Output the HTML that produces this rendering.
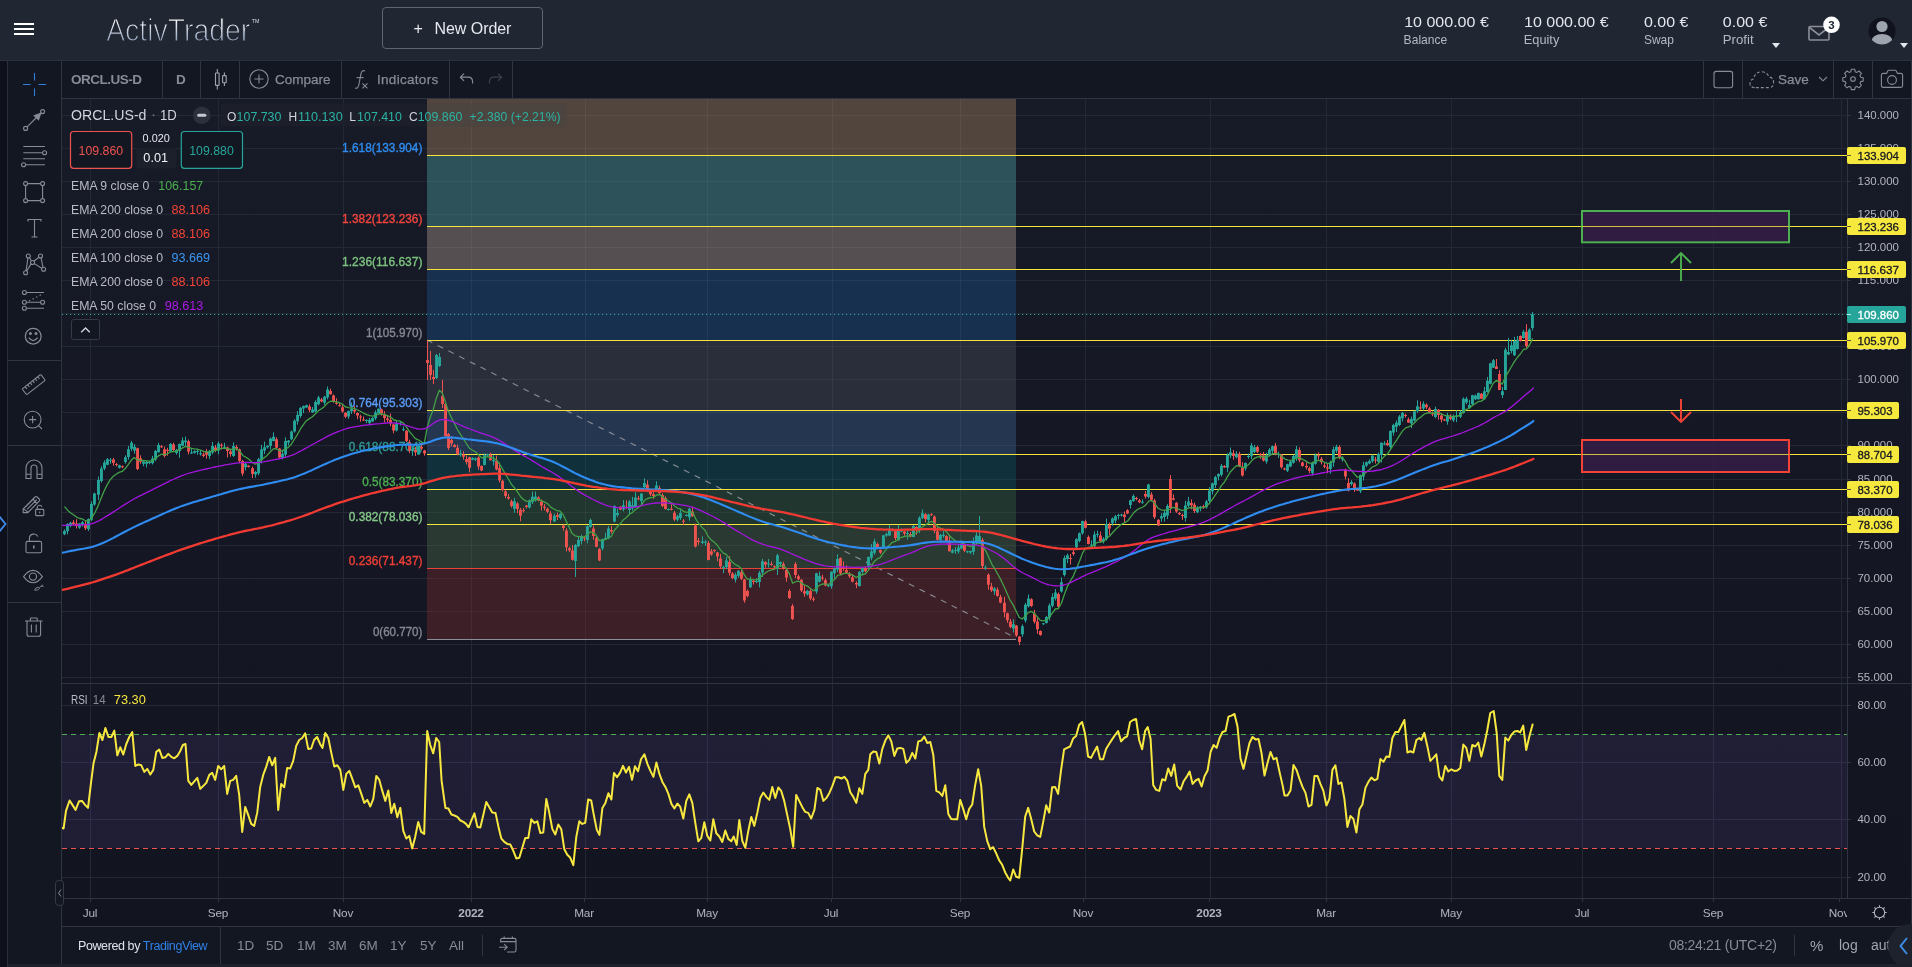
<!DOCTYPE html>
<html lang="en"><head><meta charset="utf-8"><title>ActivTrader</title>
<style>
*{box-sizing:border-box}
html,body{margin:0;padding:0}
body{width:1912px;height:967px;overflow:hidden;position:relative;background:#0f121c;font-family:"Liberation Sans",sans-serif;color:#d1d4dc}
.abs{position:absolute}
svg,#top,#tbar,#bbar{will-change:transform}
#top{position:absolute;left:0;top:0;width:1912px;height:60px;background:#202632}
#topline{position:absolute;left:0;top:60px;width:1912px;height:1px;background:#2b303c}
.ham{position:absolute;left:14px;width:20px;height:2.2px;background:#fff}
#logo{position:absolute;left:106px;top:12.3px;font-size:31px;line-height:38px;letter-spacing:-0.9px;color:#c9d2e0;-webkit-text-stroke:1.3px #202632;background:linear-gradient(#eef1f6 25%,#94a3ba 85%);-webkit-background-clip:text;background-clip:text;-webkit-text-fill-color:transparent;white-space:nowrap}
#tm{position:absolute;left:251.5px;top:16.6px;font-size:8px;color:#c9d2e0;letter-spacing:-0.3px}
#neworder{position:absolute;left:382px;top:6.5px;width:161px;height:42px;border:1px solid #5d6472;border-radius:4px;color:#e6e9ef;font-size:16px;line-height:41px;white-space:nowrap}
#neworder span{position:absolute;top:0.5px}
.acc{position:absolute;top:0;white-space:nowrap}
.acc b{position:absolute;left:0;top:12px;font-weight:normal;font-size:15.5px;line-height:18px;color:#e4e7ee;letter-spacing:-0.2px}
.acc i{position:absolute;left:0;top:31px;font-style:normal;font-size:14px;line-height:16px;color:#b3bac6;letter-spacing:-0.3px}
.tri{position:absolute;width:0;height:0;border-left:4.5px solid transparent;border-right:4.5px solid transparent;border-top:5.5px solid #e4e7ee}
#strip{position:absolute;left:0;top:61px;width:8px;height:906px;background:#0e111b;border-right:1px solid #2a2e39}
#ltool{position:absolute;left:8px;top:61px;width:54px;height:903px;background:#131722;border-right:1px solid #2f3441}
#ltool svg{position:absolute;left:12px;width:28px;height:28px;overflow:visible}
.lsep{position:absolute;left:0;width:53px;height:1px;background:#2f3441}
#tbar{position:absolute;left:62px;top:61px;width:1850px;height:38px;background:#131722;border-bottom:1px solid #2f3441;border-right:1px solid #2f3441}
.vsep{position:absolute;top:0;width:1px;height:37px;background:#2f3441}
.tbt{position:absolute;top:0.8px;height:37px;line-height:36px;font-size:13.5px;color:#868b98;white-space:nowrap;-webkit-text-stroke:0.25px #868b98}
#bbar{position:absolute;left:62px;top:926px;width:1850px;height:38px;background:#131722;border-top:1px solid #2f3441}
#bbot{position:absolute;left:8px;top:964px;width:1904px;height:3px;background:#1d212c}
.bt{position:absolute;top:0;height:37px;line-height:37px;font-size:13.5px;color:#868b98;white-space:nowrap}
</style></head><body>
<div id="top">
 <div class="ham" style="top:22.8px"></div><div class="ham" style="top:27.9px"></div><div class="ham" style="top:32.9px"></div>
 <svg class="abs" style="left:100px;top:8px" width="170" height="44" viewBox="0 0 170 44" font-family="Liberation Sans, sans-serif">
  <defs><linearGradient id="lg" x1="0" y1="0" x2="0" y2="1"><stop offset="0.25" stop-color="#f4f6fa"/><stop offset="0.8" stop-color="#8f9fb8"/></linearGradient></defs>
  <text x="6.2" y="33" font-size="31.2" fill="url(#lg)" stroke="#202632" stroke-width="1.1" textLength="144" lengthAdjust="spacingAndGlyphs">ActivTrader</text>
  <text x="151.8" y="14.6" font-size="5.6" fill="#d5dbe6" textLength="7.6" lengthAdjust="spacingAndGlyphs">TM</text>
 </svg>
 <div id="neworder"><span style="left:30.5px">+</span><span style="left:51.5px;letter-spacing:-0.05px">New Order</span></div>
 <svg class="abs" style="left:1390px;top:0" width="400" height="60" viewBox="0 0 400 60" font-family="Liberation Sans, sans-serif">
  <g font-size="15.3" fill="#e4e7ee"><text x="14.2" y="27.3" textLength="84.6" lengthAdjust="spacingAndGlyphs">10 000.00 €</text><text x="134" y="27.3" textLength="84.6" lengthAdjust="spacingAndGlyphs">10 000.00 €</text><text x="253.9" y="27.3" textLength="44.5" lengthAdjust="spacingAndGlyphs">0.00 €</text><text x="332.8" y="27.3" textLength="44.5" lengthAdjust="spacingAndGlyphs">0.00 €</text></g>
  <g font-size="13.4" fill="#b3bac6"><text x="13.6" y="43.7" textLength="43.7" lengthAdjust="spacingAndGlyphs">Balance</text><text x="133.8" y="43.7" textLength="35.5" lengthAdjust="spacingAndGlyphs">Equity</text><text x="253.9" y="43.7" textLength="30" lengthAdjust="spacingAndGlyphs">Swap</text><text x="332.8" y="43.7" textLength="30.8" lengthAdjust="spacingAndGlyphs">Profit</text></g>
 </svg>
 <div class="tri" style="left:1772.4px;top:42.6px"></div>
 <svg class="abs" style="left:1806px;top:14px" width="40" height="32" viewBox="0 0 40 32">
  <rect x="3" y="12.5" width="20" height="13.5" rx="1" fill="none" stroke="#8b8f99" stroke-width="1.6"/>
  <path d="M3.5 13.5 L13 21 L22.5 13.5" fill="none" stroke="#8b8f99" stroke-width="1.6"/>
  <circle cx="25.5" cy="10.8" r="8.3" fill="#fff"/>
  <text x="25.5" y="15" font-size="11.5" font-weight="bold" text-anchor="middle" fill="#202632" font-family="Liberation Sans, sans-serif">3</text>
 </svg>
 <svg class="abs" style="left:1866px;top:15px" width="32" height="32" viewBox="0 0 32 32">
  <defs><clipPath id="avc"><circle cx="16" cy="16" r="13.6"/></clipPath></defs>
  <circle cx="16" cy="16" r="13.6" fill="#10131d"/>
  <g clip-path="url(#avc)" fill="#9ea4ae"><circle cx="16" cy="11.5" r="5.6"/><ellipse cx="16" cy="26" rx="10.5" ry="7"/></g>
 </svg>
 <div class="tri" style="left:1899.6px;top:42.6px"></div>
</div>
<div id="topline"></div>
<div id="strip"></div>
<svg class="abs" style="left:0;top:515px" width="8" height="18" viewBox="0 0 8 18"><path d="M-1 1 L5.5 9 L-1 17" fill="none" stroke="#3d8be8" stroke-width="1.8"/></svg>
<div id="ltool">
<!-- crosshair cy=84 -->
<svg style="top:9px" viewBox="0 0 28 28"><g stroke="#2e7fe0" stroke-width="1.1" fill="none"><path d="M14.5 3 V10.5 M14.5 18.5 V26 M3 14.5 H10.5 M18.5 14.5 H26"/></g></svg>
<!-- trend line cy=120 -->
<svg style="top:45px" viewBox="0 0 28 28"><g stroke="#868b98" stroke-width="1.1" fill="none"><circle cx="5.6" cy="22.4" r="2"/><circle cx="22.6" cy="5.6" r="2"/><path d="M7.1 20.9 L17 11"/><path d="M20.8 7.2 L14.2 9.6 L18.5 13.8 Z" fill="#868b98"/></g></svg>
<!-- fib cy=156 -->
<svg style="top:81px" viewBox="0 0 28 28"><g stroke="#868b98" stroke-width="1.1" fill="none"><path d="M3.3 4.5 H25 M3.3 10.8 H22.6 M3.3 16.8 H25 M5.6 22.7 H25"/><circle cx="24.6" cy="10.8" r="2" fill="#131722"/><circle cx="3.6" cy="22.7" r="2" fill="#131722"/></g></svg>
<!-- rect cy=192 -->
<svg style="top:117px" viewBox="0 0 28 28"><g stroke="#868b98" stroke-width="1.1" fill="none"><path d="M7.6 5.6 H20.6 M7.6 22.6 H20.6 M5.6 7.6 V20.6 M22.6 7.6 V20.6"/><circle cx="5.6" cy="5.6" r="2"/><circle cx="22.6" cy="5.6" r="2"/><circle cx="5.6" cy="22.6" r="2"/><circle cx="22.6" cy="22.6" r="2"/></g></svg>
<!-- T cy=228 -->
<svg style="top:153px" viewBox="0 0 28 28"><g stroke="#868b98" stroke-width="1.1" fill="none"><path d="M8 7.5 V5.5 H21 V7.5 M14.5 5.5 V23 M11.5 23 H17.5"/></g></svg>
<!-- pattern cy=264 -->
<svg style="top:189px" viewBox="0 0 28 28"><g stroke="#868b98" stroke-width="1.1" fill="none"><path d="M6 21 L8 7.8 M9.3 7.3 L11.5 11 M13.7 11.3 L19 7.3 M21 7.5 L23 17.3 M22 18.5 L14 13.4 M11.2 13.6 L6.6 21.2"/><circle cx="8.3" cy="6" r="2"/><circle cx="20.5" cy="6" r="2"/><circle cx="12.5" cy="12.5" r="2"/><circle cx="5.6" cy="22.8" r="2"/><circle cx="23.6" cy="19.3" r="2"/></g></svg>
<!-- prediction cy=300 -->
<svg style="top:225px" viewBox="0 0 28 28"><g stroke="#868b98" stroke-width="1.1" fill="none"><path d="M6.4 6.5 H24 M6.4 16.3 H20.6 M6.4 22.3 H24"/><path d="M9 15 L22.5 8" stroke-dasharray="1.4 2.6"/><circle cx="4.4" cy="6.5" r="2"/><circle cx="4.4" cy="16.3" r="2"/><circle cx="22.6" cy="16.3" r="2"/><circle cx="4.4" cy="22.3" r="2"/></g></svg>
<!-- smiley cy=336 -->
<svg style="top:261px" viewBox="0 0 28 28"><g stroke="#868b98" stroke-width="1.2" fill="none"><circle cx="13.2" cy="14.2" r="7.9"/><path d="M8.8 15.6 Q13.2 21.5 17.6 15.6"/><circle cx="10.4" cy="11.6" r="0.9" fill="#868b98"/><circle cx="16" cy="11.6" r="0.9" fill="#868b98"/></g></svg>
<div class="lsep" style="top:299px"></div>
<!-- ruler cy=385 -->
<svg style="top:310px" viewBox="0 0 28 28"><g stroke="#868b98" stroke-width="1.1" fill="none" transform="rotate(-38 14 14)"><rect x="2.2" y="9.8" width="23.6" height="7.4" rx="1"/><path d="M6 9.8 V12.6 M9.2 9.8 V12.6 M12.4 9.8 V12.6 M15.6 9.8 V12.6 M18.8 9.8 V12.6 M22 9.8 V12.6"/></g></svg>
<!-- zoom cy=420 -->
<svg style="top:345px" viewBox="0 0 28 28"><g stroke="#868b98" stroke-width="1.1" fill="none"><circle cx="12.6" cy="13.6" r="8.4"/><path d="M12.6 10 V17.2 M9 13.6 H16.2 M18.6 19.6 L22 23"/></g></svg>
<div class="lsep" style="top:384px"></div>
<!-- magnet cy=469.5 -->
<svg style="top:394px" viewBox="0 0 28 28"><g stroke="#868b98" stroke-width="1.1" fill="none"><path d="M6 23.5 V13 A8 8 0 0 1 22 13 V23.5 H17 V13 A3 3 0 0 0 11 13 V23.5 Z M6 19.3 H11 M17 19.3 H22"/></g></svg>
<!-- pencil lock cy=504 -->
<svg style="top:429px" viewBox="0 0 28 28"><g stroke="#868b98" stroke-width="1.1" fill="none"><path d="M3.2 18.8 L15 7 A1.6 1.6 0 0 1 17.2 7 L19.2 9 A1.6 1.6 0 0 1 19.2 11.2 L7.8 22.6 H3.2 Z M12.8 9.2 L17 13.4 M3.4 18.6 L8 22.4 M5 17.4 L14.5 7.8 M7 19.4 L16.8 9.6"/><rect x="15.6" y="19.4" width="8.2" height="6.2" rx="0.8"/><path d="M17.2 19.4 V17.6 A2.5 2.5 0 0 1 22 16.8"/><path d="M19.7 21.6 V23.2"/></g></svg>
<!-- lock cy=543 -->
<svg style="top:468px" viewBox="0 0 28 28"><g stroke="#868b98" stroke-width="1.1" fill="none"><rect x="6" y="12.4" width="15.6" height="11.4" rx="1.6"/><path d="M9.4 12.4 V9.2 A4.4 4.4 0 0 1 17.8 7.6"/><path d="M13.8 16.6 V19.4" stroke-width="1.6"/></g></svg>
<!-- eye cy=577 -->
<svg style="top:502px" viewBox="0 0 28 28"><g stroke="#868b98" stroke-width="1.1" fill="none"><path d="M3.6 13.6 Q13 1.2 22.4 13.6 Q13 26 3.6 13.6 Z"/><circle cx="13" cy="13.6" r="3.6"/><path d="M14.6 27.2 Q15.2 24.4 18.2 24.2 L19.6 25.2 Q18.6 27.8 14.6 27.2 Z M19.4 24.6 L22.8 21.8 M21 23 L23.6 23.4" stroke-width="0.9"/></g></svg>
<div class="lsep" style="top:541px"></div>
<!-- trash cy=627 -->
<svg style="top:552px" viewBox="0 0 28 28"><g stroke="#868b98" stroke-width="1.1" fill="none"><path d="M5 8 H22.6 M10.4 8 V5.6 Q10.4 5 11 5 H16.6 Q17.2 5 17.2 5.6 V8 M7 8 V21.2 Q7 23.2 9 23.2 H18.6 Q20.6 23.2 20.6 21.2 V8 M11.4 11.6 V19.4 M16.2 11.6 V19.4"/></g></svg>
</div>

<div id="tbar">
 <div class="tbt" style="left:9px;font-weight:bold;letter-spacing:-0.5px;-webkit-text-stroke:0">ORCL.US-D</div>
 <div class="vsep" style="left:100px"></div>
 <div class="tbt" style="left:114px;font-weight:bold;-webkit-text-stroke:0">D</div>
 <div class="vsep" style="left:138px"></div>
 <svg class="abs" style="left:144.6px;top:4px" width="28" height="28" viewBox="0 0 28 28"><g stroke="#a0a4af" stroke-width="1.1" fill="none"><rect x="8.5" y="8" width="3.6" height="12.4" rx="0.5"/><path d="M10.3 4 V8 M10.3 20.4 V24.4"/><rect x="15.6" y="10.6" width="3.6" height="7.2" rx="0.5"/><path d="M17.4 7.4 V10.6 M17.4 17.8 V21"/></g></svg>
 <div class="vsep" style="left:177px"></div>
 <svg class="abs" style="left:182.6px;top:4.3px" width="28" height="28" viewBox="0 0 28 28"><g stroke="#868b98" stroke-width="1.1" fill="none"><circle cx="14" cy="14" r="9.2"/><path d="M14 9.4 V18.6 M9.4 14 H18.6"/></g></svg>
 <div class="tbt" style="left:213px">Compare</div>
 <div class="vsep" style="left:279px"></div>
 <svg class="abs" style="left:290px;top:4px" width="20" height="28" viewBox="0 0 20 28"><g stroke="#868b98" stroke-width="1.1" fill="none"><path d="M3 23 Q6 24 6.8 20 L9 8.6 Q9.8 4.6 13 6"/><path d="M4.6 12.6 H11.6"/><path d="M10.4 18.4 L15.4 23.4 M15.4 18.4 L10.4 23.4"/></g></svg>
 <div class="tbt" style="left:315px;letter-spacing:0.3px">Indicators</div>
 <div class="vsep" style="left:387px"></div>
 <svg class="abs" style="left:396px;top:8px" width="18" height="20" viewBox="0 0 18 20"><g stroke="#868b98" stroke-width="1.2" fill="none"><path d="M6 4.6 L2.4 8.2 L6 11.8 M2.6 8.2 H10 Q14.6 8.2 14.6 13 V14.4"/></g></svg>
 <svg class="abs" style="left:424px;top:8px" width="18" height="20" viewBox="0 0 18 20"><g stroke="#3c404c" stroke-width="1.2" fill="none"><path d="M12 4.6 L15.6 8.2 L12 11.8 M15.4 8.2 H8 Q3.4 8.2 3.4 13 V14.4"/></g></svg>
 <div class="vsep" style="left:450px"></div>
 <div class="vsep" style="left:1641px"></div>
 <svg class="abs" style="left:1647px;top:5px" width="28" height="28" viewBox="0 0 28 28"><rect x="5" y="5.4" width="18.6" height="16.4" rx="2.2" fill="none" stroke="#868b98" stroke-width="1.1"/></svg>
 <div class="vsep" style="left:1680px"></div>
 <svg class="abs" style="left:1685px;top:5px" width="30" height="28" viewBox="0 0 30 28"><path d="M7.6 21.6 Q3 21.4 3 17.4 Q3 13.8 6.8 13 Q7.6 6 14.6 5.8 Q20 5.8 22 11 Q26.6 11.6 26.6 16.4 Q26.6 21.6 22 21.6 Z" fill="none" stroke="#868b98" stroke-width="1.1" stroke-dasharray="3 2"/></svg>
 <div class="tbt" style="left:1716px">Save</div>
 <svg class="abs" style="left:1755px;top:13px" width="12" height="10" viewBox="0 0 12 10"><path d="M2 3 L6 6.8 L10 3" fill="none" stroke="#868b98" stroke-width="1.1"/></svg>
 <div class="vsep" style="left:1771px"></div>
 <svg class="abs" style="left:1777px;top:4px" width="28" height="28" viewBox="0 0 28 28"><g fill="none" stroke="#868b98" stroke-width="1.1"><circle cx="14" cy="14" r="2.3"/><path id="gear" d="M12.3 4.2 h3.4 l0.5 2.5 l1.7 0.7 l2.1-1.4 l2.4 2.4 l-1.4 2.1 l0.7 1.7 l2.5 0.5 v3.4 l-2.5 0.5 l-0.7 1.7 l1.4 2.1 l-2.4 2.4 l-2.1-1.4 l-1.7 0.7 l-0.5 2.5 h-3.4 l-0.5-2.5 l-1.7-0.7 l-2.1 1.4 l-2.4-2.4 l1.4-2.1 l-0.7-1.7 l-2.5-0.5 v-3.4 l2.5-0.5 l0.7-1.7 l-1.4-2.1 l2.4-2.4 l2.1 1.4 l1.7-0.7 z" stroke-linejoin="round"/></g></svg>
 <div class="vsep" style="left:1810px"></div>
 <svg class="abs" style="left:1815px;top:5px" width="30" height="28" viewBox="0 0 30 28"><g fill="none" stroke="#868b98" stroke-width="1.1"><path d="M4.4 9.2 Q4.4 7.4 6.2 7.4 H9.6 L10.8 4.8 Q11.2 4.2 12 4.2 H18 Q18.8 4.2 19.2 4.8 L20.4 7.4 H23.8 Q25.6 7.4 25.6 9.2 V19.6 Q25.6 21.4 23.8 21.4 H6.2 Q4.4 21.4 4.4 19.6 Z"/><circle cx="15" cy="14" r="4.4"/></g></svg>
</div>

<svg class="abs" style="left:0;top:0" width="1912" height="967" viewBox="0 0 1912 967" font-family="Liberation Sans, sans-serif">
<defs><linearGradient id="bg" x1="0" y1="0" x2="0" y2="1"><stop offset="0" stop-color="#171a27"/><stop offset="1" stop-color="#121520"/></linearGradient><clipPath id="cm"><rect x="62" y="99" width="1785" height="584"/></clipPath><clipPath id="cr"><rect x="62" y="684" width="1785" height="214"/></clipPath></defs>
<rect x="62" y="99" width="1850" height="828" fill="url(#bg)"/>
<path d="M90.5 99 V898 M218.5 99 V898 M343.5 99 V898 M471.5 99 V898 M585.5 99 V898 M707.5 99 V898 M832.5 99 V898 M960.5 99 V898 M1085.5 99 V898 M1210.5 99 V898 M1326.5 99 V898 M1451.5 99 V898 M1582.5 99 V898 M1713.5 99 V898 M1841.5 99 V898 M62 677.5 H1847 M62 644.5 H1847 M62 611.5 H1847 M62 578.5 H1847 M62 545.5 H1847 M62 512.5 H1847 M62 479.5 H1847 M62 445.5 H1847 M62 412.5 H1847 M62 379.5 H1847 M62 346.5 H1847 M62 313.5 H1847 M62 280.5 H1847 M62 247.5 H1847 M62 214.5 H1847 M62 181.5 H1847 M62 148.5 H1847 M62 115.5 H1847 M62 877.5 H1847 M62 819.5 H1847 M62 762.5 H1847 M62 705.5 H1847" stroke="#242835" stroke-width="1" fill="none"/>
<rect x="427" y="99.0" width="589" height="56.3" fill="#52453d"/>
<rect x="427" y="155.3" width="589" height="71.0" fill="#2d525a"/>
<rect x="427" y="226.3" width="589" height="43.0" fill="#554f51"/>
<rect x="427" y="269.3" width="589" height="71.0" fill="#183050"/>
<rect x="427" y="340.3" width="589" height="70.0" fill="#2a2d3a"/>
<rect x="427" y="410.3" width="589" height="44.0" fill="#243650"/>
<rect x="427" y="454.3" width="589" height="35.0" fill="#10313b"/>
<rect x="427" y="489.3" width="589" height="35.0" fill="#20362f"/>
<rect x="427" y="524.3" width="589" height="44.0" fill="#2a3932"/>
<rect x="427" y="568.3" width="589" height="71.0" fill="#3d1f27"/>
<path d="M471.5 99 V640 M585.5 99 V640 M707.5 99 V640 M832.5 99 V640 M960.5 99 V640 M427 611.5 H1016 M427 578.5 H1016 M427 545.5 H1016 M427 512.5 H1016 M427 479.5 H1016 M427 445.5 H1016 M427 412.5 H1016 M427 379.5 H1016 M427 346.5 H1016 M427 313.5 H1016 M427 280.5 H1016 M427 247.5 H1016 M427 214.5 H1016 M427 181.5 H1016 M427 148.5 H1016 M427 115.5 H1016" stroke="#ffffff" stroke-opacity="0.05" stroke-width="1" fill="none" clip-path="url(#cm)"/>
<rect x="62" y="734.0" width="1785" height="114.5" fill="#7e57c2" fill-opacity="0.13"/>
<path d="M62 734.5 H1847" stroke="#4caf50" stroke-width="1" stroke-dasharray="5 4" fill="none"/>
<path d="M62 848.5 H1847" stroke="#ef5350" stroke-width="1" stroke-dasharray="5 4" fill="none"/>
<path d="M427 340 L1016 638" stroke="#9598a1" stroke-width="1.2" stroke-dasharray="6 6" fill="none" stroke-opacity="0.85"/>
<path d="M427 155.5 H1851" stroke="#f5e340" stroke-width="1" fill="none"/>
<path d="M427 226.5 H1851" stroke="#f5e340" stroke-width="1" fill="none"/>
<path d="M427 269.5 H1851" stroke="#f5e340" stroke-width="1" fill="none"/>
<path d="M427 340.5 H1851" stroke="#f5e340" stroke-width="1" fill="none"/>
<path d="M427 410.5 H1851" stroke="#f5e340" stroke-width="1" fill="none"/>
<path d="M427 454.5 H1851" stroke="#f5e340" stroke-width="1" fill="none"/>
<path d="M427 489.5 H1851" stroke="#f5e340" stroke-width="1" fill="none"/>
<path d="M427 524.5 H1851" stroke="#f5e340" stroke-width="1" fill="none"/>
<path d="M427 568.5 H1016" stroke="#e8413a" stroke-width="1.2" fill="none"/>
<path d="M427 639.5 H1016" stroke="#8a8d97" stroke-width="1.2" fill="none"/>
<path d="M62 314.5 H1847" stroke="#26a69a" stroke-width="1" stroke-dasharray="1.2 2.8" fill="none"/>
<text x="342.1" y="151.9" font-size="11.9" fill="#2e8cf0" stroke="#2e8cf0" stroke-width="0.35" textLength="80.3" lengthAdjust="spacingAndGlyphs">1.618(133.904)</text>
<text x="342.1" y="222.9" font-size="11.9" fill="#f2453d" stroke="#f2453d" stroke-width="0.35" textLength="80.3" lengthAdjust="spacingAndGlyphs">1.382(123.236)</text>
<text x="342.1" y="265.9" font-size="11.9" fill="#7cc47f" stroke="#7cc47f" stroke-width="0.35" textLength="80.3" lengthAdjust="spacingAndGlyphs">1.236(116.637)</text>
<text x="365.9" y="336.9" font-size="11.9" fill="#868993" stroke="#868993" stroke-width="0.35" textLength="56.5" lengthAdjust="spacingAndGlyphs">1(105.970)</text>
<text x="348.8" y="406.9" font-size="11.9" fill="#5b9cf6" stroke="#5b9cf6" stroke-width="0.35" textLength="73.6" lengthAdjust="spacingAndGlyphs">0.764(95.303)</text>
<text x="348.8" y="450.9" font-size="11.9" fill="#2f9c98" stroke="#2f9c98" stroke-width="0.35" textLength="73.6" lengthAdjust="spacingAndGlyphs">0.618(88.704)</text>
<text x="362.2" y="485.9" font-size="11.9" fill="#4caf50" stroke="#4caf50" stroke-width="0.35" textLength="60.2" lengthAdjust="spacingAndGlyphs">0.5(83.370)</text>
<text x="348.8" y="520.9" font-size="11.9" fill="#86c98a" stroke="#86c98a" stroke-width="0.35" textLength="73.6" lengthAdjust="spacingAndGlyphs">0.382(78.036)</text>
<text x="348.8" y="564.9" font-size="11.9" fill="#f23f36" stroke="#f23f36" stroke-width="0.35" textLength="73.6" lengthAdjust="spacingAndGlyphs">0.236(71.437)</text>
<text x="372.9" y="635.9" font-size="11.9" fill="#868993" stroke="#868993" stroke-width="0.35" textLength="49.5" lengthAdjust="spacingAndGlyphs">0(60.770)</text>
<g clip-path="url(#cm)">
<path d="M64.5 529.4V535.1M67.5 523.3V534.3M70.5 521.9V527.3M79.5 523.0V528.9M82.5 521.0V526.6M88.5 518.4V530.9M91.5 501.4V521.2M94.5 492.7V505.8M98.5 476.6V499.9M101.5 466.2V482.6M104.5 460.2V470.3M107.5 458.0V465.3M110.5 458.0V463.7M119.5 464.8V468.5M125.5 455.4V463.7M128.5 445.9V459.7M131.5 440.9V451.1M134.5 444.0V453.8M143.5 461.2V466.2M146.5 460.6V467.5M149.5 461.0V464.2M152.5 455.9V464.5M155.5 449.9V461.2M158.5 442.8V452.7M170.5 443.0V452.4M176.5 448.9V454.6M179.5 443.4V457.8M182.5 437.4V446.3M185.5 436.6V446.7M191.5 448.7V453.9M194.5 450.4V453.7M197.5 448.8V454.7M200.5 450.2V455.6M209.5 449.9V459.1M212.5 441.9V454.3M218.5 441.6V454.3M224.5 442.8V449.2M233.5 442.4V456.8M245.5 462.0V470.5M255.5 471.0V477.7M258.5 457.8V475.2M261.5 445.0V463.5M264.5 441.6V454.0M267.5 445.3V448.6M270.5 437.5V449.7M273.5 432.3V441.3M282.5 449.7V459.4M285.5 437.3V457.9M288.5 440.0V445.3M291.5 430.5V440.3M294.5 419.2V432.7M297.5 411.2V424.6M300.5 407.3V417.9M303.5 405.6V413.1M306.5 404.7V407.8M312.5 406.9V412.8M315.5 400.2V412.2M318.5 395.8V405.4M324.5 395.8V404.9M327.5 386.5V399.4M348.5 410.5V418.9M351.5 402.5V414.0M366.5 419.3V423.1M369.5 417.9V425.1M372.5 417.1V421.9M375.5 410.3V420.2M378.5 408.4V413.9M396.5 420.5V431.5M400.5 422.1V425.6M403.5 426.4V431.1M412.5 446.1V455.8M418.5 443.9V454.9M436.5 354.0V379.0M439.5 353.0V367.0M460.5 449.7V456.7M472.5 457.2V460.2M475.5 457.6V461.1M484.5 453.4V465.4M487.5 453.6V456.3M493.5 455.2V465.5M514.5 498.0V512.7M529.5 499.3V508.5M532.5 491.5V504.0M535.5 491.6V501.7M554.5 513.6V521.8M560.5 513.3V519.7M575.5 544.0V577.0M578.5 536.9V547.1M581.5 534.6V544.4M587.5 525.4V543.3M590.5 518.6V527.5M602.5 538.7V550.3M605.5 532.7V539.6M608.5 526.1V539.3M614.5 505.2V522.4M617.5 508.6V516.9M623.5 500.0V511.3M629.5 500.2V514.2M632.5 496.8V510.7M635.5 492.2V507.5M641.5 493.3V504.9M644.5 478.3V488.1M656.5 481.3V491.9M668.5 508.5V510.6M677.5 514.8V521.5M680.5 508.9V520.0M686.5 514.1V516.4M689.5 507.8V520.6M702.5 536.4V543.9M705.5 539.8V545.9M723.5 565.8V573.2M726.5 556.8V569.2M735.5 572.6V582.5M738.5 570.2V577.8M750.5 576.5V587.9M756.5 578.2V583.2M759.5 570.9V587.4M762.5 558.9V577.0M768.5 559.0V567.6M777.5 553.8V575.0M780.5 561.6V566.6M807.5 589.8V595.5M816.5 572.8V593.9M819.5 571.6V582.6M828.5 584.2V587.1M831.5 571.3V588.8M834.5 567.8V578.5M837.5 554.3V572.1M859.5 570.9V586.6M862.5 567.3V575.5M868.5 556.6V569.4M871.5 544.0V560.2M874.5 538.7V554.8M883.5 534.9V549.2M886.5 532.7V536.8M889.5 524.9V535.9M898.5 524.9V540.6M901.5 528.2V532.2M907.5 529.8V539.6M913.5 525.1V537.2M919.5 516.2V533.1M922.5 509.4V519.2M928.5 513.9V522.5M940.5 533.8V541.0M943.5 530.9V537.8M952.5 548.9V553.4M955.5 546.9V553.9M958.5 544.0V553.6M961.5 540.4V549.2M967.5 550.7V553.2M970.5 550.6V554.0M973.5 537.4V554.9M976.5 531.8V544.0M979.5 516.0V544.0M985.5 565.3V569.9M994.5 587.1V594.9M1013.5 619.3V632.5M1022.5 624.5V636.7M1025.5 602.9V622.6M1028.5 594.5V607.6M1043.5 623.0V624.9M1046.5 615.9V623.5M1049.5 603.4V620.5M1052.5 593.4V607.4M1055.5 589.0V600.5M1061.5 577.4V592.7M1064.5 555.6V576.5M1067.5 553.6V563.1M1076.5 538.1V548.2M1079.5 532.4V542.4M1082.5 520.7V534.7M1091.5 540.3V546.2M1094.5 531.3V548.2M1097.5 530.7V537.5M1103.5 537.2V543.5M1106.5 518.7V540.7M1112.5 517.5V525.8M1115.5 514.9V523.3M1118.5 513.8V519.3M1121.5 513.8V516.6M1130.5 499.7V508.6M1133.5 494.3V501.8M1142.5 499.4V503.9M1148.5 483.8V498.4M1161.5 513.3V521.8M1164.5 510.6V521.5M1167.5 504.2V519.1M1185.5 500.8V521.6M1188.5 496.9V507.2M1197.5 506.0V513.3M1200.5 506.1V511.3M1206.5 499.9V508.7M1209.5 487.1V504.2M1212.5 482.6V494.5M1215.5 475.8V488.2M1218.5 473.3V480.4M1221.5 464.0V476.5M1227.5 453.4V472.2M1230.5 447.5V458.0M1236.5 451.3V458.4M1245.5 462.4V470.7M1248.5 453.5V458.7M1251.5 443.1V459.1M1254.5 444.9V453.2M1266.5 452.8V463.7M1269.5 448.0V456.3M1272.5 445.6V454.2M1278.5 451.6V458.0M1287.5 463.7V472.0M1290.5 460.9V467.1M1293.5 454.9V463.7M1296.5 445.9V461.0M1312.5 461.7V475.5M1315.5 453.4V464.7M1330.5 460.7V473.9M1333.5 446.6V466.8M1336.5 444.7V452.9M1342.5 456.2V461.5M1351.5 480.2V485.7M1360.5 474.6V493.0M1363.5 461.8V480.6M1366.5 461.5V467.1M1369.5 459.2V464.4M1372.5 454.5V462.9M1378.5 452.5V463.8M1381.5 442.4V462.5M1384.5 441.1V445.1M1390.5 430.3V448.7M1393.5 423.8V435.5M1396.5 420.5V432.0M1399.5 414.9V426.1M1402.5 412.0V421.6M1411.5 416.6V428.1M1414.5 410.5V421.5M1417.5 400.3V412.7M1423.5 401.3V410.4M1435.5 406.7V418.3M1447.5 412.8V424.7M1453.5 414.4V422.0M1456.5 410.4V422.2M1460.5 410.5V418.0M1463.5 397.4V413.6M1466.5 396.8V404.3M1469.5 400.0V408.0M1472.5 394.8V404.9M1475.5 394.5V400.0M1478.5 392.5V399.6M1484.5 386.9V399.3M1487.5 377.0V392.5M1490.5 362.7V384.4M1493.5 359.0V367.7M1502.5 386.9V398.0M1505.5 347.8V390.0M1508.5 337.9V355.2M1511.5 339.7V353.4M1514.5 336.9V355.9M1517.5 336.0V349.7M1523.5 329.8V338.5M1529.5 328.3V340.3M1532.5 312.0V330.4" stroke="#26a69a" stroke-width="1" fill="none"/>
<path d="M63.0 530.9h2.9v3.3h-2.9zM66.0 524.1h2.9v7.2h-2.9zM69.0 522.8h2.9v3.2h-2.9zM78.0 523.4h2.9v4.0h-2.9zM81.0 522.3h2.9v2.5h-2.9zM87.0 518.9h2.9v10.2h-2.9zM90.0 504.0h2.9v15.7h-2.9zM93.0 493.6h2.9v10.8h-2.9zM97.0 480.1h2.9v14.7h-2.9zM100.0 468.5h2.9v12.6h-2.9zM103.0 462.5h2.9v5.9h-2.9zM106.0 459.2h2.9v5.5h-2.9zM109.0 459.8h2.9v1.0h-2.9zM118.0 465.3h2.9v2.4h-2.9zM124.0 457.2h2.9v4.9h-2.9zM127.0 449.3h2.9v7.8h-2.9zM130.1 442.7h2.9v6.1h-2.9zM133.1 446.7h2.9v3.7h-2.9zM142.1 461.6h2.9v2.2h-2.9zM145.1 462.0h2.9v1.8h-2.9zM148.1 462.0h2.9v1.0h-2.9zM151.1 458.5h2.9v4.8h-2.9zM154.1 450.9h2.9v8.5h-2.9zM157.1 444.9h2.9v7.4h-2.9zM169.1 443.9h2.9v7.3h-2.9zM175.1 450.0h2.9v3.0h-2.9zM178.1 443.9h2.9v7.1h-2.9zM181.1 440.5h2.9v5.3h-2.9zM184.1 440.5h2.9v1.8h-2.9zM190.1 452.5h2.9v1.0h-2.9zM193.1 450.9h2.9v1.9h-2.9zM196.1 450.9h2.9v1.0h-2.9zM199.1 453.2h2.9v1.0h-2.9zM208.1 451.2h2.9v4.8h-2.9zM211.1 446.1h2.9v6.4h-2.9zM217.1 443.4h2.9v7.0h-2.9zM223.1 446.7h2.9v1.0h-2.9zM232.1 446.0h2.9v10.1h-2.9zM244.1 463.7h2.9v3.6h-2.9zM254.1 472.0h2.9v2.4h-2.9zM257.1 459.2h2.9v14.0h-2.9zM260.1 449.4h2.9v10.7h-2.9zM263.1 447.2h2.9v3.4h-2.9zM266.1 445.7h2.9v1.6h-2.9zM269.1 438.4h2.9v7.5h-2.9zM272.1 436.7h2.9v4.2h-2.9zM281.1 453.7h2.9v4.3h-2.9zM284.1 441.0h2.9v13.5h-2.9zM287.1 440.6h2.9v2.0h-2.9zM290.1 431.4h2.9v7.9h-2.9zM293.1 420.7h2.9v10.9h-2.9zM296.1 415.0h2.9v6.3h-2.9zM299.1 407.8h2.9v8.2h-2.9zM302.1 406.0h2.9v2.6h-2.9zM305.1 405.2h2.9v2.2h-2.9zM311.1 409.6h2.9v2.9h-2.9zM314.1 402.0h2.9v9.6h-2.9zM317.1 397.4h2.9v6.8h-2.9zM323.1 396.8h2.9v6.0h-2.9zM326.1 389.4h2.9v8.0h-2.9zM347.1 411.0h2.9v5.4h-2.9zM350.1 409.1h2.9v2.1h-2.9zM365.1 419.9h2.9v1.1h-2.9zM368.1 419.7h2.9v3.4h-2.9zM371.1 417.9h2.9v3.6h-2.9zM374.1 412.4h2.9v5.9h-2.9zM377.1 408.7h2.9v4.8h-2.9zM395.1 423.6h2.9v7.0h-2.9zM399.1 422.8h2.9v1.0h-2.9zM402.1 429.2h2.9v1.0h-2.9zM411.1 448.9h2.9v2.3h-2.9zM417.1 445.7h2.9v8.8h-2.9zM435.1 355.0h2.9v23.0h-2.9zM438.1 357.0h2.9v9.0h-2.9zM459.1 453.5h2.9v1.6h-2.9zM471.1 458.1h2.9v1.6h-2.9zM474.1 458.4h2.9v1.3h-2.9zM483.1 455.3h2.9v9.6h-2.9zM486.1 454.0h2.9v1.5h-2.9zM492.1 460.1h2.9v1.2h-2.9zM513.0 501.2h2.9v7.5h-2.9zM528.0 500.4h2.9v7.0h-2.9zM531.0 496.8h2.9v5.1h-2.9zM534.0 496.4h2.9v3.8h-2.9zM553.0 515.7h2.9v5.8h-2.9zM559.0 513.7h2.9v4.4h-2.9zM574.0 545.0h2.9v16.0h-2.9zM577.0 539.9h2.9v6.3h-2.9zM580.0 536.6h2.9v4.5h-2.9zM586.0 526.3h2.9v13.6h-2.9zM589.0 520.0h2.9v6.9h-2.9zM601.0 539.0h2.9v9.4h-2.9zM604.0 537.7h2.9v1.5h-2.9zM607.0 528.6h2.9v9.8h-2.9zM613.0 505.9h2.9v15.5h-2.9zM616.0 512.9h2.9v2.0h-2.9zM622.0 505.3h2.9v4.2h-2.9zM628.0 501.4h2.9v8.5h-2.9zM631.0 505.3h2.9v3.1h-2.9zM634.0 497.6h2.9v9.6h-2.9zM640.0 493.6h2.9v7.4h-2.9zM643.0 483.0h2.9v4.2h-2.9zM655.0 485.4h2.9v5.6h-2.9zM667.0 509.0h2.9v1.1h-2.9zM676.0 516.3h2.9v3.5h-2.9zM679.0 513.0h2.9v4.9h-2.9zM685.0 515.1h2.9v1.0h-2.9zM688.0 508.8h2.9v8.4h-2.9zM701.0 541.4h2.9v1.6h-2.9zM704.0 541.8h2.9v1.0h-2.9zM722.0 567.1h2.9v1.0h-2.9zM725.0 560.6h2.9v6.5h-2.9zM734.0 574.7h2.9v4.7h-2.9zM737.0 570.8h2.9v5.0h-2.9zM749.0 579.1h2.9v8.1h-2.9zM755.0 580.9h2.9v1.0h-2.9zM758.0 572.8h2.9v9.1h-2.9zM761.0 561.3h2.9v11.3h-2.9zM767.0 563.4h2.9v1.1h-2.9zM776.0 555.3h2.9v13.2h-2.9zM779.0 561.9h2.9v2.2h-2.9zM806.0 590.8h2.9v3.8h-2.9zM815.0 573.3h2.9v18.2h-2.9zM818.0 575.9h2.9v5.9h-2.9zM827.0 585.3h2.9v1.0h-2.9zM830.0 571.7h2.9v14.5h-2.9zM833.0 568.5h2.9v4.7h-2.9zM836.0 559.0h2.9v10.5h-2.9zM858.0 572.1h2.9v13.9h-2.9zM861.0 568.2h2.9v3.9h-2.9zM867.0 557.0h2.9v8.7h-2.9zM870.0 551.5h2.9v6.3h-2.9zM873.0 541.6h2.9v11.1h-2.9zM882.0 535.2h2.9v11.7h-2.9zM885.0 534.1h2.9v1.3h-2.9zM888.0 528.7h2.9v6.8h-2.9zM897.0 529.4h2.9v10.8h-2.9zM900.0 530.4h2.9v1.0h-2.9zM906.0 532.9h2.9v1.1h-2.9zM912.0 525.9h2.9v11.0h-2.9zM918.0 517.7h2.9v12.9h-2.9zM921.0 513.2h2.9v4.7h-2.9zM927.0 514.5h2.9v5.5h-2.9zM939.0 534.9h2.9v5.1h-2.9zM942.0 534.7h2.9v1.2h-2.9zM951.0 550.6h2.9v2.2h-2.9zM954.0 549.9h2.9v1.0h-2.9zM957.0 547.4h2.9v4.2h-2.9zM960.0 543.8h2.9v4.6h-2.9zM966.0 551.2h2.9v1.0h-2.9zM969.0 551.0h2.9v1.5h-2.9zM972.0 541.4h2.9v10.3h-2.9zM975.0 535.4h2.9v6.1h-2.9zM978.0 536.0h2.9v6.0h-2.9zM984.0 567.6h2.9v1.0h-2.9zM993.0 588.5h2.9v2.8h-2.9zM1012.0 624.3h2.9v4.2h-2.9zM1021.0 626.2h2.9v8.0h-2.9zM1024.0 604.8h2.9v15.7h-2.9zM1027.0 598.5h2.9v7.7h-2.9zM1042.0 623.3h2.9v1.0h-2.9zM1045.0 617.0h2.9v6.1h-2.9zM1048.0 605.4h2.9v12.2h-2.9zM1051.0 597.1h2.9v8.7h-2.9zM1054.0 592.5h2.9v5.9h-2.9zM1060.0 582.2h2.9v9.4h-2.9zM1063.0 558.1h2.9v16.8h-2.9zM1066.0 555.3h2.9v3.7h-2.9zM1075.0 539.2h2.9v8.0h-2.9zM1078.0 533.2h2.9v7.9h-2.9zM1081.0 521.0h2.9v12.2h-2.9zM1090.0 544.4h2.9v1.0h-2.9zM1093.0 534.5h2.9v11.7h-2.9zM1096.0 534.1h2.9v1.0h-2.9zM1102.0 538.7h2.9v2.7h-2.9zM1105.0 523.9h2.9v15.0h-2.9zM1111.0 518.5h2.9v4.7h-2.9zM1114.0 516.2h2.9v4.3h-2.9zM1117.0 515.1h2.9v1.0h-2.9zM1120.0 514.4h2.9v1.0h-2.9zM1129.0 500.2h2.9v4.9h-2.9zM1132.0 496.1h2.9v4.8h-2.9zM1141.0 501.7h2.9v1.0h-2.9zM1147.0 484.5h2.9v12.4h-2.9zM1160.0 516.2h2.9v2.2h-2.9zM1163.0 512.8h2.9v4.1h-2.9zM1166.0 506.1h2.9v9.3h-2.9zM1184.0 505.5h2.9v12.6h-2.9zM1187.0 501.6h2.9v4.2h-2.9zM1196.0 507.6h2.9v4.6h-2.9zM1199.0 506.6h2.9v1.6h-2.9zM1205.0 501.6h2.9v5.6h-2.9zM1208.0 490.4h2.9v10.5h-2.9zM1211.0 483.3h2.9v8.0h-2.9zM1214.0 476.9h2.9v8.1h-2.9zM1217.0 474.1h2.9v2.3h-2.9zM1220.0 465.8h2.9v8.9h-2.9zM1226.0 454.7h2.9v13.0h-2.9zM1229.0 452.2h2.9v3.2h-2.9zM1235.0 453.7h2.9v3.6h-2.9zM1244.0 463.0h2.9v5.5h-2.9zM1247.0 456.0h2.9v1.1h-2.9zM1250.0 445.5h2.9v10.7h-2.9zM1253.0 447.2h2.9v4.9h-2.9zM1265.0 455.2h2.9v6.4h-2.9zM1268.0 449.8h2.9v5.5h-2.9zM1271.0 446.2h2.9v4.5h-2.9zM1277.0 454.0h2.9v1.0h-2.9zM1286.0 464.2h2.9v6.6h-2.9zM1289.0 461.6h2.9v4.9h-2.9zM1292.0 455.9h2.9v6.9h-2.9zM1295.0 449.3h2.9v8.5h-2.9zM1311.0 462.9h2.9v10.0h-2.9zM1314.0 454.9h2.9v8.9h-2.9zM1329.0 462.2h2.9v6.9h-2.9zM1332.0 449.4h2.9v13.0h-2.9zM1335.0 446.8h2.9v4.0h-2.9zM1341.0 457.6h2.9v1.8h-2.9zM1350.0 481.9h2.9v2.2h-2.9zM1359.0 475.1h2.9v16.1h-2.9zM1362.0 465.3h2.9v11.1h-2.9zM1365.0 462.2h2.9v3.3h-2.9zM1368.0 460.9h2.9v2.5h-2.9zM1371.0 455.7h2.9v5.5h-2.9zM1377.0 454.1h2.9v7.6h-2.9zM1380.0 442.8h2.9v12.3h-2.9zM1383.0 443.5h2.9v1.0h-2.9zM1389.0 431.1h2.9v15.8h-2.9zM1392.0 425.1h2.9v7.3h-2.9zM1395.0 422.7h2.9v4.0h-2.9zM1398.0 416.5h2.9v8.4h-2.9zM1401.0 412.8h2.9v5.4h-2.9zM1410.0 419.1h2.9v4.4h-2.9zM1413.0 411.5h2.9v8.9h-2.9zM1416.0 406.2h2.9v5.0h-2.9zM1422.0 403.8h2.9v4.6h-2.9zM1434.0 408.9h2.9v8.0h-2.9zM1446.0 416.1h2.9v5.4h-2.9zM1452.0 416.5h2.9v3.8h-2.9zM1455.0 415.4h2.9v1.5h-2.9zM1459.0 412.3h2.9v4.4h-2.9zM1462.0 398.7h2.9v14.3h-2.9zM1465.0 398.7h2.9v3.7h-2.9zM1468.0 404.9h2.9v3.1h-2.9zM1471.0 395.3h2.9v9.0h-2.9zM1474.0 395.6h2.9v3.7h-2.9zM1477.0 393.1h2.9v6.2h-2.9zM1483.0 391.2h2.9v8.1h-2.9zM1486.0 380.7h2.9v11.2h-2.9zM1489.0 363.3h2.9v20.5h-2.9zM1492.0 360.2h2.9v7.5h-2.9zM1501.0 391.2h2.9v3.8h-2.9zM1504.0 349.7h2.9v40.3h-2.9zM1507.0 352.1h2.9v2.5h-2.9zM1510.0 345.3h2.9v5.6h-2.9zM1513.0 341.0h2.9v14.2h-2.9zM1516.0 339.7h2.9v9.3h-2.9zM1522.0 331.7h2.9v6.2h-2.9zM1528.0 329.8h2.9v9.9h-2.9zM1531.0 314.3h2.9v13.6h-2.9z" fill="#26a69a"/>
<path d="M73.5 520.2V525.4M76.5 519.2V528.4M85.5 520.6V530.0M113.5 457.9V465.8M116.5 462.9V466.4M122.5 465.5V468.2M137.5 447.6V470.1M140.5 455.3V463.7M161.5 445.0V448.0M164.5 446.6V457.5M167.5 447.8V455.7M173.5 442.7V450.9M188.5 439.6V454.4M203.5 452.5V457.2M206.5 448.9V458.6M215.5 445.0V452.2M221.5 443.3V449.5M227.5 446.7V457.5M230.5 448.7V456.6M236.5 444.9V450.7M239.5 448.6V463.1M242.5 459.9V475.8M248.5 465.1V467.5M252.5 466.6V478.1M276.5 437.3V448.9M279.5 448.0V457.9M309.5 404.3V412.1M321.5 398.0V402.2M330.5 388.7V394.6M333.5 394.5V402.7M336.5 398.3V404.8M339.5 402.9V406.5M342.5 403.9V412.7M345.5 412.1V418.2M354.5 406.3V413.7M357.5 412.3V419.2M360.5 414.7V421.7M363.5 416.5V420.8M381.5 408.9V415.7M384.5 411.1V422.3M387.5 415.0V422.0M390.5 413.5V426.1M393.5 423.6V433.3M406.5 430.2V442.0M409.5 439.7V453.1M415.5 446.8V456.0M421.5 442.6V449.9M424.5 449.8V455.7M427.5 340.4V380.0M430.5 351.0V380.0M433.5 370.0V384.0M442.5 380.0V408.0M445.5 402.0V437.0M448.5 433.0V450.0M451.5 436.1V446.3M454.5 444.0V447.4M457.5 444.6V455.3M463.5 451.3V459.7M466.5 455.4V464.5M469.5 456.7V472.4M478.5 456.4V469.8M481.5 465.3V471.2M490.5 452.7V460.5M496.5 455.5V470.3M499.5 462.4V482.4M502.5 479.6V491.4M505.5 489.5V498.1M508.5 494.0V499.8M511.5 499.6V507.6M517.5 502.1V513.2M520.5 507.9V521.3M523.5 507.9V512.6M526.5 505.1V508.5M538.5 496.3V501.3M541.5 499.4V510.6M544.5 504.0V510.4M547.5 507.7V513.1M550.5 511.1V523.9M557.5 512.7V520.0M563.5 524.5V530.8M566.5 528.3V551.4M569.5 546.8V552.2M572.5 545.1V560.5M584.5 536.0V541.3M593.5 525.6V539.7M596.5 535.7V547.3M599.5 548.0V561.1M611.5 526.0V533.4M620.5 506.3V510.2M626.5 500.3V508.9M638.5 496.0V500.3M647.5 480.4V492.1M650.5 490.7V496.0M653.5 490.2V498.8M659.5 485.8V493.7M662.5 493.3V507.1M665.5 496.3V509.7M671.5 504.2V510.4M674.5 510.9V521.2M683.5 519.1V524.8M692.5 506.6V516.7M695.5 523.5V547.5M698.5 537.9V544.8M708.5 541.1V560.3M711.5 548.9V555.8M714.5 549.4V552.4M717.5 552.0V561.3M720.5 553.9V568.9M729.5 556.0V575.6M732.5 572.0V579.3M741.5 570.0V580.2M744.5 579.0V602.8M747.5 589.5V597.4M753.5 579.9V584.5M765.5 561.3V567.8M771.5 561.5V565.8M774.5 565.5V569.7M783.5 561.8V569.7M786.5 568.1V581.8M789.5 589.0V599.0M792.5 604.0V620.0M795.5 562.0V578.0M798.5 574.7V580.1M801.5 579.1V592.1M804.5 585.9V596.7M810.5 589.0V600.3M813.5 596.9V601.5M822.5 574.7V580.5M825.5 578.5V586.4M840.5 557.4V575.1M843.5 561.3V570.7M846.5 565.4V573.8M849.5 572.0V577.9M852.5 574.1V582.3M856.5 581.4V588.2M865.5 567.0V572.4M877.5 542.5V548.2M880.5 549.4V553.9M892.5 528.3V531.3M895.5 530.0V540.1M904.5 530.9V535.8M910.5 531.8V537.4M916.5 526.3V534.9M925.5 513.2V522.4M931.5 513.1V515.8M934.5 515.5V533.1M937.5 526.6V540.5M946.5 535.3V541.8M949.5 536.4V551.5M964.5 543.7V552.2M982.5 538.0V569.0M988.5 573.4V589.7M991.5 582.9V592.1M997.5 587.4V596.7M1000.5 594.8V603.3M1004.5 596.8V617.4M1007.5 612.6V622.8M1010.5 619.0V628.2M1016.5 625.0V636.9M1019.5 636.2V645.1M1031.5 598.3V607.1M1034.5 609.8V623.5M1037.5 618.1V633.9M1040.5 630.4V635.8M1058.5 592.5V607.7M1070.5 554.0V564.5M1073.5 548.3V555.7M1085.5 519.6V528.4M1088.5 535.5V544.4M1100.5 531.5V542.6M1109.5 522.5V535.1M1124.5 511.6V522.4M1127.5 509.2V514.1M1136.5 496.8V500.2M1139.5 498.8V503.2M1145.5 491.0V498.6M1151.5 492.2V501.2M1154.5 498.8V519.0M1158.5 519.3V526.1M1170.5 475.0V513.0M1173.5 494.4V500.3M1176.5 502.1V512.9M1179.5 511.9V515.0M1182.5 513.6V519.9M1191.5 499.3V509.3M1194.5 502.6V513.1M1203.5 504.7V508.9M1224.5 465.2V467.9M1233.5 450.0V459.7M1239.5 451.8V467.1M1242.5 462.2V476.5M1257.5 445.7V453.2M1260.5 452.9V458.8M1263.5 452.0V461.5M1275.5 443.0V455.4M1281.5 453.9V468.5M1284.5 467.7V470.2M1299.5 447.3V462.3M1302.5 461.5V466.6M1306.5 462.3V469.4M1309.5 466.6V473.2M1318.5 452.3V459.8M1321.5 457.0V464.4M1324.5 462.7V468.3M1327.5 464.1V473.3M1339.5 445.2V459.2M1345.5 468.6V479.4M1348.5 478.0V491.4M1354.5 482.5V492.0M1357.5 488.8V490.8M1375.5 456.9V463.5M1387.5 440.0V445.9M1405.5 413.7V417.6M1408.5 417.6V422.9M1420.5 401.4V409.6M1426.5 403.3V409.1M1429.5 406.8V412.9M1432.5 411.5V416.2M1438.5 409.0V419.6M1441.5 413.4V422.3M1444.5 418.8V421.0M1450.5 414.3V420.2M1481.5 393.0V399.0M1496.5 359.0V368.9M1499.5 370.1V390.0M1520.5 335.4V341.6M1526.5 324.2V347.8" stroke="#ef5350" stroke-width="1" fill="none"/>
<path d="M72.0 522.6h2.9v1.3h-2.9zM75.0 523.6h2.9v2.4h-2.9zM84.0 523.8h2.9v4.4h-2.9zM112.0 459.4h2.9v3.5h-2.9zM115.0 463.9h2.9v1.2h-2.9zM121.0 466.3h2.9v1.0h-2.9zM136.1 448.3h2.9v20.8h-2.9zM139.1 458.3h2.9v3.5h-2.9zM160.1 446.2h2.9v1.1h-2.9zM163.1 449.3h2.9v6.8h-2.9zM166.1 450.0h2.9v1.0h-2.9zM172.1 444.6h2.9v5.3h-2.9zM187.1 441.3h2.9v10.2h-2.9zM202.1 454.4h2.9v1.6h-2.9zM205.1 451.9h2.9v2.9h-2.9zM214.1 447.4h2.9v2.5h-2.9zM220.1 444.7h2.9v1.0h-2.9zM226.1 447.4h2.9v3.5h-2.9zM229.1 451.4h2.9v2.6h-2.9zM235.1 446.9h2.9v1.9h-2.9zM238.1 449.6h2.9v11.4h-2.9zM241.1 461.0h2.9v12.4h-2.9zM247.1 465.7h2.9v1.4h-2.9zM251.1 468.3h2.9v5.6h-2.9zM275.1 439.2h2.9v8.6h-2.9zM278.1 448.6h2.9v8.9h-2.9zM308.1 406.4h2.9v3.7h-2.9zM320.1 399.6h2.9v2.0h-2.9zM329.1 391.1h2.9v3.1h-2.9zM332.1 395.5h2.9v6.3h-2.9zM335.1 402.4h2.9v1.3h-2.9zM338.1 405.2h2.9v1.0h-2.9zM341.1 407.2h2.9v4.2h-2.9zM344.1 412.8h2.9v4.0h-2.9zM353.1 409.9h2.9v1.7h-2.9zM356.1 413.1h2.9v2.3h-2.9zM359.1 416.4h2.9v1.0h-2.9zM362.1 419.4h2.9v1.0h-2.9zM380.1 409.6h2.9v3.8h-2.9zM383.1 414.6h2.9v3.5h-2.9zM386.1 418.5h2.9v1.4h-2.9zM389.1 420.0h2.9v3.5h-2.9zM392.1 424.4h2.9v6.0h-2.9zM405.1 430.7h2.9v10.2h-2.9zM408.1 442.6h2.9v7.9h-2.9zM414.1 450.0h2.9v2.3h-2.9zM420.1 446.7h2.9v1.8h-2.9zM423.1 450.6h2.9v2.8h-2.9zM426.1 360.0h2.9v3.0h-2.9zM429.1 365.0h2.9v10.0h-2.9zM432.1 377.0h2.9v2.0h-2.9zM441.1 396.0h2.9v8.0h-2.9zM444.1 404.0h2.9v32.0h-2.9zM447.1 434.0h2.9v14.0h-2.9zM450.1 440.1h2.9v3.3h-2.9zM453.1 445.0h2.9v2.1h-2.9zM456.1 447.8h2.9v6.4h-2.9zM462.1 454.4h2.9v2.3h-2.9zM465.1 459.1h2.9v3.0h-2.9zM468.1 457.2h2.9v10.6h-2.9zM477.1 457.6h2.9v8.9h-2.9zM480.1 465.9h2.9v4.5h-2.9zM489.1 454.8h2.9v5.4h-2.9zM495.1 460.8h2.9v8.6h-2.9zM498.1 468.2h2.9v12.0h-2.9zM501.1 480.7h2.9v9.3h-2.9zM504.1 491.5h2.9v4.6h-2.9zM507.1 497.1h2.9v1.5h-2.9zM510.1 501.3h2.9v4.7h-2.9zM516.0 503.6h2.9v5.5h-2.9zM519.0 509.8h2.9v6.0h-2.9zM522.0 510.2h2.9v1.0h-2.9zM525.0 505.6h2.9v1.5h-2.9zM537.0 497.6h2.9v2.8h-2.9zM540.0 501.6h2.9v4.1h-2.9zM543.0 506.8h2.9v1.0h-2.9zM546.0 508.8h2.9v2.9h-2.9zM549.0 513.4h2.9v6.8h-2.9zM556.0 514.9h2.9v1.9h-2.9zM562.0 525.4h2.9v2.7h-2.9zM565.0 530.6h2.9v16.6h-2.9zM568.0 548.3h2.9v2.0h-2.9zM571.0 550.6h2.9v9.1h-2.9zM583.0 537.5h2.9v1.0h-2.9zM592.0 528.5h2.9v7.6h-2.9zM595.0 537.8h2.9v9.0h-2.9zM598.0 549.2h2.9v11.4h-2.9zM610.0 530.0h2.9v1.5h-2.9zM619.0 506.7h2.9v2.8h-2.9zM625.0 506.9h2.9v1.1h-2.9zM637.0 498.3h2.9v1.0h-2.9zM646.0 484.7h2.9v6.4h-2.9zM649.0 491.4h2.9v2.9h-2.9zM652.0 494.3h2.9v1.7h-2.9zM658.0 488.1h2.9v5.1h-2.9zM661.0 494.9h2.9v11.1h-2.9zM664.0 497.9h2.9v11.1h-2.9zM670.0 508.8h2.9v1.0h-2.9zM673.0 512.8h2.9v6.8h-2.9zM682.0 520.8h2.9v1.0h-2.9zM691.0 511.6h2.9v4.7h-2.9zM694.0 525.4h2.9v21.2h-2.9zM697.0 540.7h2.9v1.2h-2.9zM707.0 543.1h2.9v16.8h-2.9zM710.0 551.3h2.9v3.1h-2.9zM713.0 549.9h2.9v1.0h-2.9zM716.0 552.4h2.9v4.2h-2.9zM719.0 558.6h2.9v8.0h-2.9zM728.0 562.0h2.9v10.7h-2.9zM731.0 573.4h2.9v4.7h-2.9zM740.0 572.2h2.9v6.5h-2.9zM743.0 579.5h2.9v21.1h-2.9zM746.0 590.9h2.9v5.0h-2.9zM752.0 580.8h2.9v1.3h-2.9zM764.0 561.9h2.9v2.6h-2.9zM770.0 563.9h2.9v1.0h-2.9zM773.0 566.3h2.9v1.0h-2.9zM782.0 564.0h2.9v4.8h-2.9zM785.0 570.0h2.9v7.6h-2.9zM788.0 591.0h2.9v7.0h-2.9zM791.0 606.0h2.9v13.0h-2.9zM794.0 564.0h2.9v11.0h-2.9zM797.0 576.3h2.9v3.0h-2.9zM800.0 579.7h2.9v10.8h-2.9zM803.0 591.3h2.9v2.1h-2.9zM809.0 591.0h2.9v7.5h-2.9zM812.0 598.7h2.9v1.0h-2.9zM821.0 577.4h2.9v1.0h-2.9zM824.0 580.2h2.9v5.2h-2.9zM839.0 558.1h2.9v15.5h-2.9zM842.0 567.0h2.9v1.0h-2.9zM845.0 570.0h2.9v2.8h-2.9zM848.0 574.5h2.9v1.7h-2.9zM851.0 577.2h2.9v4.5h-2.9zM855.0 583.0h2.9v1.6h-2.9zM864.0 568.3h2.9v2.9h-2.9zM876.0 544.1h2.9v3.7h-2.9zM879.0 550.0h2.9v2.5h-2.9zM891.0 529.5h2.9v1.0h-2.9zM894.0 531.2h2.9v6.7h-2.9zM903.0 531.5h2.9v2.0h-2.9zM909.0 533.9h2.9v2.6h-2.9zM915.0 527.0h2.9v2.1h-2.9zM924.0 514.2h2.9v4.7h-2.9zM930.0 514.3h2.9v1.0h-2.9zM933.0 516.4h2.9v14.3h-2.9zM936.0 531.3h2.9v8.5h-2.9zM945.0 535.9h2.9v5.6h-2.9zM948.0 542.5h2.9v8.7h-2.9zM963.0 544.6h2.9v6.1h-2.9zM981.0 540.0h2.9v26.0h-2.9zM987.0 574.8h2.9v10.0h-2.9zM990.0 586.4h2.9v3.9h-2.9zM996.0 589.8h2.9v6.2h-2.9zM999.0 597.0h2.9v5.5h-2.9zM1003.0 602.7h2.9v9.6h-2.9zM1006.0 613.3h2.9v6.9h-2.9zM1009.0 621.5h2.9v5.5h-2.9zM1015.0 625.4h2.9v10.0h-2.9zM1018.0 636.6h2.9v5.5h-2.9zM1030.0 599.3h2.9v6.6h-2.9zM1033.0 613.4h2.9v8.3h-2.9zM1036.0 621.5h2.9v7.8h-2.9zM1039.0 631.0h2.9v4.1h-2.9zM1057.0 594.0h2.9v12.7h-2.9zM1069.0 558.0h2.9v1.0h-2.9zM1072.0 552.3h2.9v1.6h-2.9zM1084.0 521.4h2.9v6.4h-2.9zM1087.0 537.1h2.9v7.0h-2.9zM1099.0 535.5h2.9v5.6h-2.9zM1108.0 525.2h2.9v3.2h-2.9zM1123.0 514.4h2.9v2.7h-2.9zM1126.0 510.2h2.9v3.2h-2.9zM1135.0 498.1h2.9v1.0h-2.9zM1138.0 500.3h2.9v1.9h-2.9zM1144.0 494.0h2.9v2.4h-2.9zM1150.0 494.5h2.9v5.3h-2.9zM1153.0 500.4h2.9v16.9h-2.9zM1157.0 519.7h2.9v5.7h-2.9zM1169.0 479.0h2.9v29.0h-2.9zM1172.0 498.2h2.9v1.6h-2.9zM1175.0 502.8h2.9v8.8h-2.9zM1178.0 513.0h2.9v1.2h-2.9zM1181.0 515.1h2.9v1.0h-2.9zM1190.0 503.1h2.9v2.1h-2.9zM1193.0 504.7h2.9v6.3h-2.9zM1202.0 506.2h2.9v1.0h-2.9zM1223.0 465.9h2.9v1.4h-2.9zM1232.0 453.2h2.9v2.8h-2.9zM1238.0 453.8h2.9v12.8h-2.9zM1241.0 467.5h2.9v8.0h-2.9zM1256.0 447.0h2.9v4.7h-2.9zM1259.0 454.2h2.9v1.4h-2.9zM1262.0 455.6h2.9v4.9h-2.9zM1274.0 445.7h2.9v9.0h-2.9zM1280.0 454.8h2.9v12.4h-2.9zM1283.0 468.4h2.9v1.0h-2.9zM1298.0 450.1h2.9v10.1h-2.9zM1301.0 462.6h2.9v3.3h-2.9zM1305.0 466.1h2.9v1.2h-2.9zM1308.0 468.3h2.9v2.7h-2.9zM1317.0 455.3h2.9v1.0h-2.9zM1320.0 458.7h2.9v3.6h-2.9zM1323.0 465.4h2.9v1.3h-2.9zM1326.0 467.3h2.9v1.2h-2.9zM1338.0 447.0h2.9v9.9h-2.9zM1344.0 469.7h2.9v6.8h-2.9zM1347.0 483.1h2.9v7.4h-2.9zM1353.0 483.5h2.9v5.4h-2.9zM1356.0 489.5h2.9v1.0h-2.9zM1374.0 459.5h2.9v1.0h-2.9zM1386.0 442.9h2.9v2.3h-2.9zM1404.0 415.0h2.9v1.0h-2.9zM1407.0 419.5h2.9v2.9h-2.9zM1419.0 407.4h2.9v1.0h-2.9zM1425.0 404.8h2.9v2.5h-2.9zM1428.0 408.4h2.9v4.0h-2.9zM1431.0 413.4h2.9v1.0h-2.9zM1437.0 409.7h2.9v5.4h-2.9zM1440.0 415.6h2.9v4.0h-2.9zM1443.0 419.6h2.9v1.0h-2.9zM1449.0 417.1h2.9v1.7h-2.9zM1480.0 393.7h2.9v5.0h-2.9zM1495.0 366.4h2.9v2.5h-2.9zM1498.0 373.9h2.9v16.1h-2.9zM1519.0 336.0h2.9v5.0h-2.9zM1525.0 331.7h2.9v14.2h-2.9z" fill="#ef5350"/>
<path d="M64.8 506.9 L67.8 510.4 L70.8 512.9 L73.8 515.1 L76.9 517.3 L79.9 518.5 L82.9 519.2 L85.9 521.0 L88.9 520.6 L92.0 517.3 L95.0 512.5 L98.0 506.1 L101.0 498.5 L104.0 491.3 L107.1 484.9 L110.1 479.9 L113.1 476.5 L116.1 474.2 L119.1 472.4 L122.2 471.4 L125.2 468.6 L128.2 464.7 L131.2 460.3 L134.2 457.6 L137.3 459.9 L140.3 460.3 L143.3 460.5 L146.3 460.8 L149.3 461.1 L152.4 460.6 L155.4 458.6 L158.4 455.9 L161.4 454.2 L164.4 454.6 L167.5 453.8 L170.5 451.8 L173.5 451.5 L176.5 451.2 L179.5 449.7 L182.6 447.9 L185.6 446.4 L188.6 447.4 L191.6 448.4 L194.6 448.9 L197.7 449.3 L200.7 450.1 L203.7 451.3 L206.7 452.0 L209.7 451.8 L212.8 450.7 L215.8 450.5 L218.8 449.1 L221.8 448.4 L224.8 448.1 L227.9 448.6 L230.9 449.7 L233.9 448.9 L236.9 448.9 L239.9 451.3 L243.0 455.7 L246.0 457.3 L249.0 459.3 L252.0 462.2 L255.0 464.2 L258.1 463.2 L261.1 460.4 L264.1 457.8 L267.1 455.4 L270.1 452.0 L273.2 448.9 L276.2 448.7 L279.2 450.5 L282.2 451.1 L285.2 449.1 L288.3 447.4 L291.3 444.2 L294.3 439.5 L297.3 434.6 L300.3 429.2 L303.4 424.6 L306.4 420.7 L309.4 418.6 L312.4 416.8 L315.4 413.8 L318.5 410.6 L321.5 408.8 L324.5 406.4 L327.5 403.0 L330.5 401.2 L333.6 401.3 L336.6 401.8 L339.6 402.7 L342.6 404.4 L345.6 406.9 L348.7 407.7 L351.7 408.0 L354.7 408.7 L357.7 410.0 L360.7 411.5 L363.8 413.3 L366.8 414.6 L369.8 415.6 L372.8 416.1 L375.8 415.4 L378.9 414.0 L381.9 413.9 L384.9 414.7 L387.9 415.8 L390.9 417.3 L394.0 420.0 L397.0 420.7 L400.0 421.1 L403.0 422.7 L406.0 426.4 L409.1 431.2 L412.1 434.7 L415.1 438.3 L418.1 439.8 L421.1 441.5 L424.2 443.9 L427.2 427.7 L430.2 417.2 L433.2 409.5 L436.2 398.6 L439.3 390.3 L442.3 393.0 L445.3 401.6 L448.3 410.9 L451.3 417.4 L454.4 423.3 L457.4 429.5 L460.4 434.3 L463.4 438.8 L466.4 443.5 L469.5 448.3 L472.5 450.3 L475.5 451.9 L478.5 454.8 L481.5 457.9 L484.6 457.4 L487.6 456.7 L490.6 457.4 L493.6 458.0 L496.6 460.2 L499.7 464.2 L502.7 469.4 L505.7 474.7 L508.7 479.5 L511.7 484.8 L514.8 488.1 L517.8 492.3 L520.8 497.0 L523.8 499.8 L526.8 501.3 L529.9 501.1 L532.9 500.3 L535.9 499.5 L538.9 499.7 L541.9 500.9 L545.0 502.3 L548.0 504.1 L551.0 507.4 L554.0 509.0 L557.0 510.6 L560.1 511.2 L563.1 514.6 L566.1 521.1 L569.1 526.9 L572.1 533.5 L575.2 535.8 L578.2 536.6 L581.2 536.6 L584.2 537.0 L587.2 534.8 L590.3 531.9 L593.3 532.7 L596.3 535.5 L599.3 540.6 L602.3 540.2 L605.4 539.7 L608.4 537.5 L611.4 536.3 L614.4 530.2 L617.4 526.8 L620.5 523.3 L623.5 519.7 L626.5 517.4 L629.5 514.2 L632.5 512.4 L635.6 509.5 L638.6 507.4 L641.6 504.7 L644.6 500.3 L647.6 498.5 L650.7 497.7 L653.7 497.3 L656.7 494.9 L659.7 494.6 L662.7 496.9 L665.8 499.3 L668.8 501.2 L671.8 503.0 L674.8 506.3 L677.8 508.3 L680.9 509.2 L683.9 511.7 L686.9 512.4 L689.9 511.7 L692.9 512.6 L696.0 519.4 L699.0 523.9 L702.0 527.4 L705.0 530.3 L708.0 536.2 L711.1 539.9 L714.1 542.1 L717.1 545.0 L720.1 549.3 L723.1 552.9 L726.2 554.4 L729.2 558.1 L732.2 562.1 L735.2 564.6 L738.2 565.9 L741.3 568.4 L744.3 574.9 L747.3 579.1 L750.3 579.1 L753.3 579.7 L756.4 579.9 L759.4 578.5 L762.4 575.1 L765.4 572.9 L768.4 571.0 L771.5 569.8 L774.5 569.3 L777.5 566.5 L780.5 565.6 L783.5 566.2 L786.6 568.5 L789.6 574.4 L792.6 583.3 L795.6 581.7 L798.6 581.2 L801.7 583.1 L804.7 585.1 L807.7 586.2 L810.7 588.7 L813.7 590.9 L816.8 587.4 L819.8 585.1 L822.8 583.8 L825.8 584.1 L828.8 584.3 L831.9 581.8 L834.9 579.1 L837.9 575.1 L840.9 574.8 L843.9 573.4 L847.0 573.3 L850.0 573.9 L853.0 575.4 L856.0 577.3 L859.0 576.2 L862.1 574.6 L865.1 574.0 L868.1 570.6 L871.1 566.8 L874.1 561.7 L877.2 559.0 L880.2 557.7 L883.2 553.2 L886.2 549.4 L889.2 545.2 L892.3 542.3 L895.3 541.4 L898.3 539.0 L901.3 537.3 L904.3 536.5 L907.4 535.8 L910.4 536.0 L913.4 533.9 L916.4 533.0 L919.4 529.9 L922.5 526.6 L925.5 525.0 L928.5 522.9 L931.5 521.4 L934.5 523.3 L937.6 526.6 L940.6 528.2 L943.6 529.5 L946.6 531.9 L949.6 535.8 L952.7 538.7 L955.7 541.0 L958.7 542.2 L961.7 542.6 L964.7 544.2 L967.8 545.6 L970.8 546.7 L973.8 545.6 L976.8 543.6 L979.8 542.1 L982.9 546.8 L985.9 551.0 L988.9 557.8 L991.9 564.3 L994.9 569.1 L998.0 574.5 L1001.0 580.1 L1004.0 586.5 L1007.0 593.3 L1010.0 600.0 L1013.1 604.9 L1016.1 611.0 L1019.1 617.2 L1022.1 619.0 L1025.1 616.2 L1028.2 612.6 L1031.2 611.3 L1034.2 613.4 L1037.2 616.6 L1040.2 620.3 L1043.3 620.9 L1046.3 620.1 L1049.3 617.2 L1052.3 613.1 L1055.3 609.0 L1058.4 608.5 L1061.4 603.3 L1064.4 594.2 L1067.4 586.4 L1070.4 581.0 L1073.5 575.6 L1076.5 568.3 L1079.5 561.3 L1082.5 553.2 L1085.5 548.1 L1088.6 547.3 L1091.6 546.7 L1094.6 544.3 L1097.6 542.3 L1100.6 542.0 L1103.7 541.4 L1106.7 537.9 L1109.7 536.0 L1112.7 532.5 L1115.7 529.2 L1118.8 526.4 L1121.8 524.0 L1124.8 522.6 L1127.8 520.8 L1130.8 516.7 L1133.9 512.6 L1136.9 509.9 L1139.9 508.3 L1142.9 507.0 L1145.9 504.9 L1149.0 500.8 L1152.0 500.6 L1155.0 503.9 L1158.0 508.2 L1161.0 509.8 L1164.1 510.4 L1167.1 509.6 L1170.1 509.3 L1173.1 507.3 L1176.1 508.2 L1179.2 509.4 L1182.2 510.7 L1185.2 509.7 L1188.2 508.1 L1191.2 507.5 L1194.3 508.2 L1197.3 508.1 L1200.3 507.8 L1203.3 507.7 L1206.3 506.4 L1209.4 503.2 L1212.4 499.3 L1215.4 494.8 L1218.4 490.7 L1221.4 485.7 L1224.5 482.0 L1227.5 476.6 L1230.5 471.7 L1233.5 468.5 L1236.5 465.6 L1239.6 465.8 L1242.6 467.7 L1245.6 466.8 L1248.6 464.6 L1251.6 460.8 L1254.7 458.1 L1257.7 456.8 L1260.7 456.5 L1263.7 457.3 L1266.7 456.9 L1269.8 455.5 L1272.8 453.6 L1275.8 453.8 L1278.8 453.9 L1281.8 456.5 L1284.9 459.1 L1287.9 460.1 L1290.9 460.4 L1293.9 459.5 L1296.9 457.5 L1300.0 458.0 L1303.0 459.6 L1306.0 461.1 L1309.0 463.1 L1312.0 463.1 L1315.1 461.4 L1318.1 460.4 L1321.1 460.8 L1324.1 462.0 L1327.1 463.3 L1330.2 463.1 L1333.2 460.3 L1336.2 457.6 L1339.2 457.5 L1342.2 457.5 L1345.3 461.3 L1348.3 467.1 L1351.3 470.1 L1354.3 473.9 L1357.3 477.2 L1360.4 476.8 L1363.4 474.5 L1366.4 472.0 L1369.4 469.8 L1372.4 467.0 L1375.5 465.7 L1378.5 463.4 L1381.5 459.3 L1384.5 456.1 L1387.5 453.9 L1390.6 449.3 L1393.6 444.5 L1396.6 440.1 L1399.6 435.4 L1402.6 430.9 L1405.7 427.9 L1408.7 426.8 L1411.7 425.3 L1414.7 422.5 L1417.7 419.3 L1420.8 417.1 L1423.8 414.4 L1426.8 413.0 L1429.8 412.9 L1432.8 413.2 L1435.9 412.3 L1438.9 412.9 L1441.9 414.2 L1444.9 415.5 L1447.9 415.6 L1451.0 416.3 L1454.0 416.3 L1457.0 416.1 L1460.0 415.4 L1463.0 412.0 L1466.1 409.4 L1469.1 408.5 L1472.1 405.8 L1475.1 403.8 L1478.1 401.7 L1481.2 401.1 L1484.2 399.1 L1487.2 395.4 L1490.2 389.0 L1493.2 383.2 L1496.3 380.4 L1499.3 382.3 L1502.3 384.1 L1505.3 377.2 L1508.3 372.2 L1511.4 366.8 L1514.4 361.6 L1517.4 357.3 L1520.4 354.0 L1523.4 349.5 L1526.5 348.8 L1529.5 345.0 L1532.5 338.9" stroke="#43a047" stroke-width="1.3" fill="none" stroke-linejoin="round" stroke-linecap="round"/>
<path d="M62.0 525.4 L65.0 525.3 L68.0 525.2 L71.0 525.2 L74.0 525.1 L77.0 525.0 L80.0 525.0 L83.0 524.9 L86.0 524.6 L89.0 524.3 L92.0 523.6 L95.0 522.6 L98.0 521.2 L101.0 519.6 L104.0 517.8 L107.0 515.9 L110.0 514.1 L113.0 512.1 L116.0 510.2 L119.0 508.3 L122.0 506.3 L125.0 504.4 L128.0 502.5 L131.0 500.7 L134.0 499.0 L137.0 497.4 L140.0 495.8 L143.0 494.3 L146.0 492.8 L149.0 491.3 L152.0 489.8 L155.0 488.3 L158.0 486.8 L161.0 485.3 L164.0 483.8 L167.0 482.4 L170.0 480.9 L173.0 479.5 L176.0 478.2 L179.0 476.8 L182.0 475.6 L185.0 474.5 L188.0 473.5 L191.0 472.6 L194.0 471.9 L197.0 471.1 L200.0 470.4 L203.0 469.7 L206.0 469.0 L209.0 468.3 L212.0 467.7 L215.0 467.0 L218.0 466.4 L221.0 465.8 L224.0 465.2 L227.0 464.7 L230.0 464.2 L233.0 463.7 L236.0 463.2 L239.0 462.9 L242.0 462.7 L245.0 462.5 L248.0 462.5 L251.0 462.7 L254.0 462.7 L257.0 462.5 L260.0 462.3 L263.0 461.9 L266.0 461.4 L269.0 460.8 L272.0 460.2 L275.0 459.6 L278.0 459.0 L281.0 458.3 L284.0 457.6 L287.0 456.9 L290.0 455.9 L293.0 454.8 L296.0 453.5 L299.0 451.9 L302.0 450.3 L305.0 448.6 L308.0 447.0 L311.0 445.3 L314.0 443.7 L317.0 442.0 L320.0 440.4 L323.0 438.7 L326.0 437.1 L329.0 435.6 L332.0 434.1 L335.0 432.8 L338.0 431.6 L341.0 430.5 L344.0 429.4 L347.0 428.5 L350.0 427.7 L353.0 427.1 L356.0 426.6 L359.0 426.1 L362.0 425.6 L365.0 425.2 L368.0 424.8 L371.0 424.5 L374.0 424.2 L377.0 423.9 L380.0 423.7 L383.0 423.3 L386.0 423.0 L389.0 422.9 L392.0 422.9 L395.0 423.0 L398.0 423.4 L401.0 424.1 L404.0 424.9 L407.0 425.7 L410.0 426.7 L413.0 427.6 L416.0 428.5 L419.0 429.2 L422.0 429.2 L425.0 428.5 L428.0 427.1 L431.0 425.1 L434.0 422.9 L437.0 421.1 L440.0 419.9 L443.0 419.4 L446.0 419.6 L449.0 420.4 L452.0 421.4 L455.0 422.7 L458.0 424.0 L461.0 425.3 L464.0 426.6 L467.0 427.8 L470.0 429.0 L473.0 430.1 L476.0 431.2 L479.0 432.3 L482.0 433.3 L485.0 434.3 L488.0 435.3 L491.0 436.3 L494.0 437.6 L497.0 439.1 L500.0 440.7 L503.0 442.6 L506.0 444.6 L509.0 446.6 L512.0 448.6 L515.0 450.6 L518.0 452.4 L521.0 454.2 L524.0 455.9 L527.0 457.5 L530.0 459.2 L533.0 461.1 L536.0 463.0 L539.0 464.9 L542.0 466.7 L545.0 468.4 L548.0 470.1 L551.0 471.7 L554.0 473.5 L557.0 475.4 L560.0 477.4 L563.0 479.6 L566.0 481.8 L569.0 484.2 L572.0 486.6 L575.0 488.8 L578.0 490.9 L581.0 492.9 L584.0 494.6 L587.0 496.3 L590.0 497.9 L593.0 499.5 L596.0 500.9 L599.0 502.3 L602.0 503.6 L605.0 504.8 L608.0 505.8 L611.0 506.6 L614.0 507.1 L617.0 507.5 L620.0 507.7 L623.0 507.8 L626.0 507.7 L629.0 507.7 L632.0 507.4 L635.0 507.1 L638.0 506.5 L641.0 505.9 L644.0 505.1 L647.0 504.4 L650.0 503.8 L653.0 503.3 L656.0 503.0 L659.0 502.8 L662.0 502.8 L665.0 502.9 L668.0 503.2 L671.0 503.5 L674.0 503.8 L677.0 504.2 L680.0 504.6 L683.0 505.1 L686.0 505.6 L689.0 506.3 L692.0 507.1 L695.0 508.1 L698.0 509.3 L701.0 510.7 L704.0 512.1 L707.0 513.6 L710.0 515.0 L713.0 516.5 L716.0 518.1 L719.0 519.8 L722.0 521.5 L725.0 523.4 L728.0 525.4 L731.0 527.3 L734.0 529.1 L737.0 530.9 L740.0 532.7 L743.0 534.5 L746.0 536.2 L749.0 538.0 L752.0 539.6 L755.0 541.1 L758.0 542.4 L761.0 543.6 L764.0 544.6 L767.0 545.5 L770.0 546.3 L773.0 547.0 L776.0 547.8 L779.0 548.7 L782.0 549.7 L785.0 550.9 L788.0 552.2 L791.0 553.5 L794.0 554.8 L797.0 556.1 L800.0 557.3 L803.0 558.6 L806.0 559.8 L809.0 561.1 L812.0 562.2 L815.0 563.3 L818.0 564.2 L821.0 565.0 L824.0 565.6 L827.0 566.1 L830.0 566.4 L833.0 566.6 L836.0 566.8 L839.0 566.9 L842.0 567.0 L845.0 567.1 L848.0 567.1 L851.0 567.2 L854.0 567.3 L857.0 567.3 L860.0 567.2 L863.0 567.1 L866.0 566.9 L869.0 566.7 L872.0 566.2 L875.0 565.6 L878.0 564.9 L881.0 564.1 L884.0 563.1 L887.0 562.0 L890.0 560.8 L893.0 559.7 L896.0 558.5 L899.0 557.3 L902.0 556.2 L905.0 555.1 L908.0 554.0 L911.0 552.9 L914.0 551.6 L917.0 550.3 L920.0 549.0 L923.0 547.8 L926.0 546.7 L929.0 545.9 L932.0 545.2 L935.0 544.8 L938.0 544.4 L941.0 544.2 L944.0 544.1 L947.0 544.0 L950.0 544.0 L953.0 544.1 L956.0 544.2 L959.0 544.3 L962.0 544.4 L965.0 544.6 L968.0 544.7 L971.0 544.8 L974.0 544.9 L977.0 545.2 L980.0 545.8 L983.0 546.7 L986.0 548.0 L989.0 549.5 L992.0 551.0 L995.0 552.5 L998.0 554.3 L1001.0 556.4 L1004.0 558.6 L1007.0 561.1 L1010.0 563.7 L1013.0 566.2 L1016.0 568.5 L1019.0 570.6 L1022.0 572.5 L1025.0 574.0 L1028.0 575.4 L1031.0 576.9 L1034.0 578.4 L1037.0 580.0 L1040.0 581.5 L1043.0 582.9 L1046.0 584.0 L1049.0 584.8 L1052.0 585.4 L1055.0 585.8 L1058.0 585.9 L1061.0 585.7 L1064.0 585.0 L1067.0 584.0 L1070.0 582.8 L1073.0 581.3 L1076.0 579.8 L1079.0 578.3 L1082.0 576.8 L1085.0 575.4 L1088.0 574.0 L1091.0 572.8 L1094.0 571.6 L1097.0 570.4 L1100.0 569.2 L1103.0 567.9 L1106.0 566.6 L1109.0 565.2 L1112.0 563.7 L1115.0 562.3 L1118.0 560.8 L1121.0 559.2 L1124.0 557.5 L1127.0 555.7 L1130.0 553.7 L1133.0 551.6 L1136.0 549.3 L1139.0 546.8 L1142.0 544.2 L1145.0 541.8 L1148.0 539.8 L1151.0 538.1 L1154.0 536.8 L1157.0 535.8 L1160.0 534.9 L1163.0 534.0 L1166.0 533.1 L1169.0 532.2 L1172.0 531.4 L1175.0 530.6 L1178.0 529.8 L1181.0 528.9 L1184.0 528.1 L1187.0 527.3 L1190.0 526.5 L1193.0 525.7 L1196.0 524.9 L1199.0 523.9 L1202.0 522.8 L1205.0 521.7 L1208.0 520.4 L1211.0 518.9 L1214.0 517.4 L1217.0 515.8 L1220.0 514.1 L1223.0 512.4 L1226.0 510.6 L1229.0 508.9 L1232.0 507.2 L1235.0 505.5 L1238.0 503.9 L1241.0 502.3 L1244.0 500.8 L1247.0 499.2 L1250.0 497.6 L1253.0 495.9 L1256.0 494.2 L1259.0 492.5 L1262.0 490.9 L1265.0 489.3 L1268.0 487.9 L1271.0 486.5 L1274.0 485.2 L1277.0 483.9 L1280.0 482.8 L1283.0 481.8 L1286.0 480.8 L1289.0 479.9 L1292.0 479.0 L1295.0 478.2 L1298.0 477.5 L1301.0 476.8 L1304.0 476.2 L1307.0 475.7 L1310.0 475.2 L1313.0 474.7 L1316.0 474.2 L1319.0 473.6 L1322.0 473.0 L1325.0 472.4 L1328.0 471.8 L1331.0 471.2 L1334.0 470.7 L1337.0 470.3 L1340.0 470.0 L1343.0 470.0 L1346.0 470.2 L1349.0 470.5 L1352.0 470.8 L1355.0 471.1 L1358.0 471.4 L1361.0 471.5 L1364.0 471.6 L1367.0 471.5 L1370.0 471.3 L1373.0 471.0 L1376.0 470.5 L1379.0 470.0 L1382.0 469.3 L1385.0 468.4 L1388.0 467.3 L1391.0 466.1 L1394.0 464.8 L1397.0 463.2 L1400.0 461.5 L1403.0 459.7 L1406.0 457.7 L1409.0 455.8 L1412.0 453.9 L1415.0 452.1 L1418.0 450.3 L1421.0 448.6 L1424.0 446.9 L1427.0 445.3 L1430.0 443.8 L1433.0 442.4 L1436.0 441.2 L1439.0 440.1 L1442.0 439.1 L1445.0 438.3 L1448.0 437.4 L1451.0 436.5 L1454.0 435.6 L1457.0 434.6 L1460.0 433.6 L1463.0 432.5 L1466.0 431.3 L1469.0 430.0 L1472.0 428.8 L1475.0 427.5 L1478.0 426.3 L1481.0 424.9 L1484.0 423.3 L1487.0 421.6 L1490.0 419.7 L1493.0 417.9 L1496.0 416.3 L1499.0 414.7 L1502.0 413.1 L1505.0 411.5 L1508.0 409.5 L1511.0 407.3 L1514.0 404.8 L1517.0 402.3 L1520.0 399.7 L1523.0 397.0 L1526.0 394.4 L1529.0 392.0 L1532.0 389.6 L1533.3 388.0" stroke="#a514e0" stroke-width="1.3" fill="none" stroke-linejoin="round" stroke-linecap="round"/>
<path d="M62.0 552.8 L65.0 552.2 L68.0 551.5 L71.0 550.9 L74.0 550.4 L77.0 549.8 L80.0 549.3 L83.0 548.8 L86.0 548.2 L89.0 547.6 L92.0 546.9 L95.0 546.0 L98.0 544.9 L101.0 543.8 L104.0 542.5 L107.0 541.1 L110.0 539.6 L113.0 538.1 L116.0 536.5 L119.0 534.9 L122.0 533.3 L125.0 531.7 L128.0 530.1 L131.0 528.6 L134.0 527.1 L137.0 525.6 L140.0 524.2 L143.0 522.9 L146.0 521.5 L149.0 520.2 L152.0 518.8 L155.0 517.5 L158.0 516.1 L161.0 514.8 L164.0 513.4 L167.0 512.1 L170.0 510.8 L173.0 509.5 L176.0 508.3 L179.0 507.1 L182.0 505.9 L185.0 504.9 L188.0 503.9 L191.0 502.9 L194.0 502.0 L197.0 501.2 L200.0 500.3 L203.0 499.5 L206.0 498.6 L209.0 497.7 L212.0 496.8 L215.0 495.9 L218.0 495.0 L221.0 494.2 L224.0 493.3 L227.0 492.4 L230.0 491.6 L233.0 490.8 L236.0 490.0 L239.0 489.2 L242.0 488.6 L245.0 488.0 L248.0 487.4 L251.0 486.9 L254.0 486.4 L257.0 485.8 L260.0 485.3 L263.0 484.7 L266.0 484.0 L269.0 483.4 L272.0 482.7 L275.0 482.1 L278.0 481.5 L281.0 480.8 L284.0 480.1 L287.0 479.4 L290.0 478.6 L293.0 477.7 L296.0 476.7 L299.0 475.6 L302.0 474.4 L305.0 473.2 L308.0 471.9 L311.0 470.6 L314.0 469.1 L317.0 467.8 L320.0 466.4 L323.0 465.0 L326.0 463.7 L329.0 462.4 L332.0 461.1 L335.0 459.8 L338.0 458.7 L341.0 457.5 L344.0 456.4 L347.0 455.4 L350.0 454.4 L353.0 453.5 L356.0 452.7 L359.0 451.9 L362.0 451.1 L365.0 450.4 L368.0 449.7 L371.0 449.1 L374.0 448.5 L377.0 447.9 L380.0 447.4 L383.0 446.9 L386.0 446.4 L389.0 446.0 L392.0 445.6 L395.0 445.2 L398.0 445.0 L401.0 444.8 L404.0 444.7 L407.0 444.6 L410.0 444.6 L413.0 444.7 L416.0 444.7 L419.0 444.5 L422.0 444.0 L425.0 443.3 L428.0 442.4 L431.0 441.4 L434.0 440.3 L437.0 439.3 L440.0 438.4 L443.0 437.8 L446.0 437.5 L449.0 437.5 L452.0 437.6 L455.0 437.8 L458.0 438.1 L461.0 438.5 L464.0 438.8 L467.0 439.2 L470.0 439.5 L473.0 439.9 L476.0 440.2 L479.0 440.6 L482.0 440.9 L485.0 441.2 L488.0 441.6 L491.0 442.1 L494.0 442.7 L497.0 443.3 L500.0 444.1 L503.0 444.9 L506.0 445.9 L509.0 446.9 L512.0 447.9 L515.0 449.0 L518.0 450.2 L521.0 451.3 L524.0 452.4 L527.0 453.5 L530.0 454.5 L533.0 455.4 L536.0 456.3 L539.0 457.2 L542.0 458.0 L545.0 458.9 L548.0 459.9 L551.0 461.0 L554.0 462.3 L557.0 463.6 L560.0 465.1 L563.0 466.7 L566.0 468.3 L569.0 469.9 L572.0 471.5 L575.0 473.1 L578.0 474.5 L581.0 476.0 L584.0 477.3 L587.0 478.5 L590.0 479.7 L593.0 480.8 L596.0 481.9 L599.0 482.9 L602.0 483.8 L605.0 484.6 L608.0 485.3 L611.0 485.9 L614.0 486.4 L617.0 486.8 L620.0 487.1 L623.0 487.4 L626.0 487.7 L629.0 488.0 L632.0 488.3 L635.0 488.5 L638.0 488.7 L641.0 488.9 L644.0 489.1 L647.0 489.2 L650.0 489.4 L653.0 489.5 L656.0 489.6 L659.0 489.8 L662.0 490.0 L665.0 490.2 L668.0 490.4 L671.0 490.7 L674.0 491.0 L677.0 491.4 L680.0 491.8 L683.0 492.3 L686.0 492.9 L689.0 493.5 L692.0 494.1 L695.0 494.9 L698.0 495.7 L701.0 496.7 L704.0 497.6 L707.0 498.7 L710.0 499.8 L713.0 501.0 L716.0 502.2 L719.0 503.4 L722.0 504.7 L725.0 506.0 L728.0 507.3 L731.0 508.6 L734.0 509.9 L737.0 511.2 L740.0 512.5 L743.0 513.8 L746.0 515.1 L749.0 516.4 L752.0 517.6 L755.0 518.8 L758.0 519.9 L761.0 521.0 L764.0 522.0 L767.0 522.9 L770.0 523.8 L773.0 524.6 L776.0 525.4 L779.0 526.3 L782.0 527.1 L785.0 528.0 L788.0 528.9 L791.0 529.9 L794.0 530.9 L797.0 532.0 L800.0 533.0 L803.0 534.1 L806.0 535.2 L809.0 536.3 L812.0 537.3 L815.0 538.3 L818.0 539.2 L821.0 540.1 L824.0 540.9 L827.0 541.7 L830.0 542.5 L833.0 543.1 L836.0 543.8 L839.0 544.5 L842.0 545.1 L845.0 545.6 L848.0 546.2 L851.0 546.7 L854.0 547.1 L857.0 547.5 L860.0 547.9 L863.0 548.1 L866.0 548.3 L869.0 548.4 L872.0 548.4 L875.0 548.3 L878.0 548.1 L881.0 547.9 L884.0 547.7 L887.0 547.4 L890.0 547.2 L893.0 547.0 L896.0 546.7 L899.0 546.5 L902.0 546.2 L905.0 545.9 L908.0 545.5 L911.0 545.1 L914.0 544.6 L917.0 544.1 L920.0 543.5 L923.0 543.0 L926.0 542.6 L929.0 542.2 L932.0 542.0 L935.0 541.8 L938.0 541.7 L941.0 541.6 L944.0 541.6 L947.0 541.6 L950.0 541.6 L953.0 541.7 L956.0 541.8 L959.0 541.9 L962.0 541.9 L965.0 542.0 L968.0 542.0 L971.0 541.9 L974.0 542.0 L977.0 542.1 L980.0 542.3 L983.0 542.7 L986.0 543.3 L989.0 544.0 L992.0 545.0 L995.0 546.1 L998.0 547.3 L1001.0 548.7 L1004.0 550.1 L1007.0 551.5 L1010.0 553.0 L1013.0 554.5 L1016.0 555.9 L1019.0 557.3 L1022.0 558.7 L1025.0 559.9 L1028.0 561.1 L1031.0 562.2 L1034.0 563.3 L1037.0 564.3 L1040.0 565.2 L1043.0 566.1 L1046.0 566.9 L1049.0 567.6 L1052.0 568.2 L1055.0 568.7 L1058.0 569.0 L1061.0 569.2 L1064.0 569.2 L1067.0 569.0 L1070.0 568.8 L1073.0 568.4 L1076.0 568.0 L1079.0 567.4 L1082.0 566.8 L1085.0 566.3 L1088.0 565.7 L1091.0 565.1 L1094.0 564.6 L1097.0 564.0 L1100.0 563.4 L1103.0 562.8 L1106.0 562.2 L1109.0 561.5 L1112.0 560.7 L1115.0 559.8 L1118.0 558.9 L1121.0 557.9 L1124.0 556.9 L1127.0 555.8 L1130.0 554.6 L1133.0 553.5 L1136.0 552.4 L1139.0 551.3 L1142.0 550.2 L1145.0 549.2 L1148.0 548.3 L1151.0 547.4 L1154.0 546.5 L1157.0 545.7 L1160.0 544.9 L1163.0 544.1 L1166.0 543.4 L1169.0 542.6 L1172.0 541.9 L1175.0 541.2 L1178.0 540.5 L1181.0 539.8 L1184.0 539.2 L1187.0 538.6 L1190.0 538.0 L1193.0 537.4 L1196.0 536.8 L1199.0 536.2 L1202.0 535.5 L1205.0 534.7 L1208.0 533.8 L1211.0 532.8 L1214.0 531.8 L1217.0 530.6 L1220.0 529.4 L1223.0 528.1 L1226.0 526.8 L1229.0 525.4 L1232.0 524.1 L1235.0 522.7 L1238.0 521.3 L1241.0 520.0 L1244.0 518.6 L1247.0 517.3 L1250.0 516.0 L1253.0 514.8 L1256.0 513.5 L1259.0 512.3 L1262.0 511.2 L1265.0 510.0 L1268.0 508.9 L1271.0 507.9 L1274.0 506.9 L1277.0 506.0 L1280.0 505.0 L1283.0 504.2 L1286.0 503.3 L1289.0 502.5 L1292.0 501.6 L1295.0 500.8 L1298.0 500.0 L1301.0 499.2 L1304.0 498.4 L1307.0 497.7 L1310.0 496.9 L1313.0 496.2 L1316.0 495.5 L1319.0 494.8 L1322.0 494.1 L1325.0 493.5 L1328.0 492.8 L1331.0 492.2 L1334.0 491.6 L1337.0 491.0 L1340.0 490.5 L1343.0 490.0 L1346.0 489.6 L1349.0 489.3 L1352.0 489.0 L1355.0 488.8 L1358.0 488.5 L1361.0 488.3 L1364.0 488.0 L1367.0 487.7 L1370.0 487.2 L1373.0 486.7 L1376.0 486.2 L1379.0 485.5 L1382.0 484.8 L1385.0 484.0 L1388.0 483.1 L1391.0 482.1 L1394.0 481.0 L1397.0 479.9 L1400.0 478.7 L1403.0 477.5 L1406.0 476.3 L1409.0 475.0 L1412.0 473.8 L1415.0 472.5 L1418.0 471.3 L1421.0 470.1 L1424.0 468.9 L1427.0 467.8 L1430.0 466.6 L1433.0 465.6 L1436.0 464.6 L1439.0 463.6 L1442.0 462.6 L1445.0 461.7 L1448.0 460.9 L1451.0 460.0 L1454.0 459.1 L1457.0 458.1 L1460.0 457.1 L1463.0 456.1 L1466.0 455.1 L1469.0 454.0 L1472.0 452.9 L1475.0 451.9 L1478.0 450.7 L1481.0 449.6 L1484.0 448.3 L1487.0 447.1 L1490.0 445.7 L1493.0 444.4 L1496.0 443.0 L1499.0 441.6 L1502.0 440.1 L1505.0 438.6 L1508.0 437.0 L1511.0 435.3 L1514.0 433.5 L1517.0 431.6 L1520.0 429.7 L1523.0 427.8 L1526.0 426.0 L1529.0 424.1 L1532.0 422.2 L1533.3 420.9" stroke="#2f8cf2" stroke-width="2.1" fill="none" stroke-linejoin="round" stroke-linecap="round"/>
<path d="M62.0 590.0 L65.0 589.3 L68.0 588.6 L71.0 587.8 L74.0 587.1 L77.0 586.4 L80.0 585.7 L83.0 584.9 L86.0 584.1 L89.0 583.3 L92.0 582.5 L95.0 581.6 L98.0 580.6 L101.0 579.7 L104.0 578.7 L107.0 577.7 L110.0 576.7 L113.0 575.6 L116.0 574.6 L119.0 573.5 L122.0 572.4 L125.0 571.2 L128.0 570.1 L131.0 568.9 L134.0 567.7 L137.0 566.5 L140.0 565.3 L143.0 564.2 L146.0 563.0 L149.0 561.8 L152.0 560.7 L155.0 559.5 L158.0 558.3 L161.0 557.2 L164.0 556.0 L167.0 554.9 L170.0 553.8 L173.0 552.7 L176.0 551.5 L179.0 550.4 L182.0 549.3 L185.0 548.3 L188.0 547.3 L191.0 546.3 L194.0 545.3 L197.0 544.4 L200.0 543.4 L203.0 542.5 L206.0 541.6 L209.0 540.7 L212.0 539.8 L215.0 538.9 L218.0 538.0 L221.0 537.2 L224.0 536.3 L227.0 535.5 L230.0 534.6 L233.0 533.8 L236.0 533.1 L239.0 532.3 L242.0 531.6 L245.0 531.0 L248.0 530.4 L251.0 529.8 L254.0 529.2 L257.0 528.7 L260.0 528.0 L263.0 527.4 L266.0 526.7 L269.0 526.0 L272.0 525.3 L275.0 524.5 L278.0 523.7 L281.0 522.9 L284.0 522.1 L287.0 521.2 L290.0 520.4 L293.0 519.5 L296.0 518.5 L299.0 517.5 L302.0 516.5 L305.0 515.4 L308.0 514.3 L311.0 513.2 L314.0 512.0 L317.0 510.8 L320.0 509.6 L323.0 508.5 L326.0 507.4 L329.0 506.3 L332.0 505.3 L335.0 504.2 L338.0 503.2 L341.0 502.2 L344.0 501.3 L347.0 500.3 L350.0 499.4 L353.0 498.5 L356.0 497.6 L359.0 496.8 L362.0 495.9 L365.0 495.1 L368.0 494.3 L371.0 493.5 L374.0 492.8 L377.0 492.1 L380.0 491.4 L383.0 490.7 L386.0 490.1 L389.0 489.4 L392.0 488.8 L395.0 488.2 L398.0 487.7 L401.0 487.2 L404.0 486.8 L407.0 486.4 L410.0 486.1 L413.0 485.7 L416.0 485.2 L419.0 484.6 L422.0 483.9 L425.0 483.1 L428.0 482.2 L431.0 481.2 L434.0 480.3 L437.0 479.4 L440.0 478.6 L443.0 477.9 L446.0 477.3 L449.0 476.8 L452.0 476.4 L455.0 476.1 L458.0 475.7 L461.0 475.5 L464.0 475.2 L467.0 475.0 L470.0 474.8 L473.0 474.6 L476.0 474.4 L479.0 474.3 L482.0 474.2 L485.0 474.1 L488.0 473.9 L491.0 473.8 L494.0 473.7 L497.0 473.7 L500.0 473.8 L503.0 473.9 L506.0 474.0 L509.0 474.3 L512.0 474.6 L515.0 474.9 L518.0 475.2 L521.0 475.6 L524.0 475.9 L527.0 476.2 L530.0 476.5 L533.0 476.8 L536.0 477.1 L539.0 477.4 L542.0 477.7 L545.0 478.1 L548.0 478.4 L551.0 478.8 L554.0 479.2 L557.0 479.7 L560.0 480.2 L563.0 480.8 L566.0 481.4 L569.0 482.0 L572.0 482.7 L575.0 483.4 L578.0 484.0 L581.0 484.6 L584.0 485.2 L587.0 485.8 L590.0 486.3 L593.0 486.8 L596.0 487.2 L599.0 487.7 L602.0 488.1 L605.0 488.4 L608.0 488.8 L611.0 489.1 L614.0 489.3 L617.0 489.6 L620.0 489.8 L623.0 490.0 L626.0 490.1 L629.0 490.2 L632.0 490.3 L635.0 490.4 L638.0 490.5 L641.0 490.6 L644.0 490.6 L647.0 490.7 L650.0 490.8 L653.0 490.8 L656.0 490.9 L659.0 491.0 L662.0 491.1 L665.0 491.2 L668.0 491.4 L671.0 491.5 L674.0 491.7 L677.0 491.9 L680.0 492.2 L683.0 492.4 L686.0 492.7 L689.0 493.1 L692.0 493.4 L695.0 493.9 L698.0 494.3 L701.0 494.9 L704.0 495.4 L707.0 496.0 L710.0 496.7 L713.0 497.4 L716.0 498.1 L719.0 498.8 L722.0 499.5 L725.0 500.3 L728.0 501.0 L731.0 501.8 L734.0 502.5 L737.0 503.2 L740.0 503.9 L743.0 504.7 L746.0 505.4 L749.0 506.1 L752.0 506.7 L755.0 507.4 L758.0 508.0 L761.0 508.6 L764.0 509.1 L767.0 509.6 L770.0 510.1 L773.0 510.6 L776.0 511.1 L779.0 511.6 L782.0 512.1 L785.0 512.7 L788.0 513.4 L791.0 514.0 L794.0 514.7 L797.0 515.4 L800.0 516.1 L803.0 516.8 L806.0 517.5 L809.0 518.3 L812.0 519.0 L815.0 519.7 L818.0 520.4 L821.0 521.1 L824.0 521.7 L827.0 522.4 L830.0 523.0 L833.0 523.6 L836.0 524.1 L839.0 524.7 L842.0 525.2 L845.0 525.7 L848.0 526.2 L851.0 526.6 L854.0 527.0 L857.0 527.4 L860.0 527.8 L863.0 528.1 L866.0 528.4 L869.0 528.7 L872.0 528.9 L875.0 529.1 L878.0 529.3 L881.0 529.4 L884.0 529.6 L887.0 529.7 L890.0 529.7 L893.0 529.8 L896.0 529.8 L899.0 529.8 L902.0 529.8 L905.0 529.7 L908.0 529.7 L911.0 529.6 L914.0 529.5 L917.0 529.4 L920.0 529.3 L923.0 529.2 L926.0 529.2 L929.0 529.2 L932.0 529.2 L935.0 529.3 L938.0 529.4 L941.0 529.5 L944.0 529.7 L947.0 529.8 L950.0 530.0 L953.0 530.2 L956.0 530.3 L959.0 530.4 L962.0 530.6 L965.0 530.7 L968.0 530.8 L971.0 530.9 L974.0 531.0 L977.0 531.1 L980.0 531.4 L983.0 531.6 L986.0 532.0 L989.0 532.4 L992.0 532.9 L995.0 533.6 L998.0 534.3 L1001.0 535.0 L1004.0 535.8 L1007.0 536.7 L1010.0 537.5 L1013.0 538.4 L1016.0 539.2 L1019.0 540.0 L1022.0 540.9 L1025.0 541.7 L1028.0 542.4 L1031.0 543.2 L1034.0 544.0 L1037.0 544.7 L1040.0 545.3 L1043.0 546.0 L1046.0 546.6 L1049.0 547.1 L1052.0 547.6 L1055.0 548.0 L1058.0 548.4 L1061.0 548.6 L1064.0 548.9 L1067.0 549.0 L1070.0 549.0 L1073.0 549.0 L1076.0 549.0 L1079.0 548.8 L1082.0 548.6 L1085.0 548.5 L1088.0 548.3 L1091.0 548.1 L1094.0 547.9 L1097.0 547.8 L1100.0 547.6 L1103.0 547.5 L1106.0 547.4 L1109.0 547.2 L1112.0 547.0 L1115.0 546.8 L1118.0 546.5 L1121.0 546.2 L1124.0 545.9 L1127.0 545.5 L1130.0 545.1 L1133.0 544.6 L1136.0 544.1 L1139.0 543.6 L1142.0 543.1 L1145.0 542.7 L1148.0 542.2 L1151.0 541.8 L1154.0 541.4 L1157.0 541.0 L1160.0 540.7 L1163.0 540.4 L1166.0 540.0 L1169.0 539.7 L1172.0 539.4 L1175.0 539.0 L1178.0 538.7 L1181.0 538.3 L1184.0 537.9 L1187.0 537.6 L1190.0 537.2 L1193.0 536.8 L1196.0 536.4 L1199.0 536.0 L1202.0 535.6 L1205.0 535.2 L1208.0 534.7 L1211.0 534.2 L1214.0 533.6 L1217.0 533.0 L1220.0 532.4 L1223.0 531.8 L1226.0 531.2 L1229.0 530.7 L1232.0 530.1 L1235.0 529.6 L1238.0 529.0 L1241.0 528.3 L1244.0 527.6 L1247.0 526.9 L1250.0 526.1 L1253.0 525.3 L1256.0 524.5 L1259.0 523.8 L1262.0 523.0 L1265.0 522.3 L1268.0 521.6 L1271.0 520.9 L1274.0 520.2 L1277.0 519.5 L1280.0 518.9 L1283.0 518.2 L1286.0 517.6 L1289.0 517.0 L1292.0 516.4 L1295.0 515.8 L1298.0 515.3 L1301.0 514.7 L1304.0 514.2 L1307.0 513.6 L1310.0 513.1 L1313.0 512.6 L1316.0 512.1 L1319.0 511.6 L1322.0 511.1 L1325.0 510.6 L1328.0 510.1 L1331.0 509.7 L1334.0 509.2 L1337.0 508.8 L1340.0 508.4 L1343.0 508.1 L1346.0 507.8 L1349.0 507.6 L1352.0 507.4 L1355.0 507.1 L1358.0 506.9 L1361.0 506.6 L1364.0 506.2 L1367.0 505.9 L1370.0 505.5 L1373.0 505.1 L1376.0 504.6 L1379.0 504.1 L1382.0 503.6 L1385.0 503.0 L1388.0 502.4 L1391.0 501.8 L1394.0 501.1 L1397.0 500.3 L1400.0 499.6 L1403.0 498.8 L1406.0 497.9 L1409.0 497.1 L1412.0 496.2 L1415.0 495.3 L1418.0 494.4 L1421.0 493.5 L1424.0 492.7 L1427.0 491.8 L1430.0 491.0 L1433.0 490.2 L1436.0 489.3 L1439.0 488.6 L1442.0 487.8 L1445.0 487.0 L1448.0 486.3 L1451.0 485.6 L1454.0 484.8 L1457.0 484.1 L1460.0 483.3 L1463.0 482.5 L1466.0 481.7 L1469.0 480.9 L1472.0 480.0 L1475.0 479.2 L1478.0 478.3 L1481.0 477.4 L1484.0 476.6 L1487.0 475.7 L1490.0 474.8 L1493.0 473.9 L1496.0 472.9 L1499.0 472.0 L1502.0 471.0 L1505.0 470.1 L1508.0 469.0 L1511.0 467.9 L1514.0 466.8 L1517.0 465.6 L1520.0 464.4 L1523.0 463.2 L1526.0 462.0 L1529.0 460.8 L1532.0 459.6 L1533.3 458.9" stroke="#f23a32" stroke-width="2.3" fill="none" stroke-linejoin="round" stroke-linecap="round"/>
</g>
<g clip-path="url(#cr)"><path d="M62.0 827.9 L63.6 828.5 L66.0 810.9 L69.6 800.5 L72.4 804.9 L75.6 809.9 L79.0 801.3 L82.0 800.9 L85.0 804.9 L88.0 807.9 L91.0 782.9 L93.6 762.9 L96.4 751.9 L99.4 733.0 L102.4 740.0 L105.4 728.0 L108.4 737.0 L111.4 737.0 L114.3 730.6 L117.3 755.3 L120.3 747.3 L123.3 754.5 L126.3 744.0 L129.3 737.0 L132.3 732.0 L135.3 765.9 L138.3 764.5 L141.3 765.3 L144.3 771.9 L147.3 768.9 L150.3 774.5 L153.3 769.9 L156.3 751.9 L159.3 749.5 L162.3 757.9 L165.3 757.3 L168.3 753.9 L171.3 756.9 L174.3 758.3 L177.3 755.9 L180.3 750.9 L182.9 745.0 L185.5 744.0 L188.3 780.9 L191.3 784.9 L194.3 781.3 L197.3 777.9 L200.3 788.9 L203.3 785.9 L206.3 782.9 L209.3 774.9 L212.2 772.9 L215.2 779.9 L218.2 765.9 L221.2 769.3 L224.2 765.9 L227.2 793.9 L230.2 780.9 L233.2 779.9 L236.2 775.9 L239.2 794.9 L242.2 831.9 L245.2 806.9 L248.2 814.9 L251.2 823.9 L254.2 825.9 L257.2 812.9 L260.2 786.9 L263.2 774.9 L266.2 766.9 L269.2 756.9 L272.2 765.3 L275.2 757.9 L278.2 809.9 L281.2 783.9 L284.2 787.3 L287.2 767.9 L290.2 768.5 L293.2 760.9 L296.2 745.9 L299.2 740.0 L302.2 738.0 L305.2 733.4 L308.2 748.9 L311.2 748.5 L314.1 740.0 L317.1 737.0 L320.1 744.0 L322.5 747.9 L325.3 733.0 L328.3 738.0 L331.3 752.9 L334.3 766.5 L337.3 765.3 L340.3 769.9 L343.3 789.9 L346.3 773.9 L349.3 770.9 L352.3 778.9 L355.3 787.3 L358.3 785.3 L361.3 793.9 L364.3 802.9 L367.3 799.9 L370.3 806.5 L373.3 798.9 L376.3 775.9 L379.3 779.9 L382.3 790.9 L385.3 800.9 L388.3 790.5 L391.3 812.9 L394.3 803.9 L397.3 817.3 L400.3 807.9 L403.3 830.9 L406.3 838.5 L409.3 835.9 L412.2 848.4 L415.2 836.9 L418.2 821.9 L421.2 831.9 L424.2 833.9 L427.2 731.0 L430.2 745.0 L433.2 753.3 L436.2 738.0 L439.2 742.0 L441.6 780.9 L445.4 807.9 L448.4 808.5 L451.4 814.5 L454.4 815.5 L457.4 816.9 L460.4 820.5 L463.4 821.9 L466.0 823.9 L468.6 827.3 L471.6 819.9 L474.4 813.3 L477.4 826.9 L480.3 827.5 L483.3 814.9 L486.3 801.9 L489.3 807.3 L492.3 812.5 L495.5 812.9 L498.5 826.9 L501.3 838.5 L504.3 841.9 L507.3 843.9 L510.3 844.5 L513.3 850.8 L516.3 858.4 L519.3 857.8 L522.3 847.8 L525.3 837.9 L528.3 837.9 L531.3 819.3 L534.3 822.9 L537.3 821.3 L540.3 832.9 L543.3 832.5 L546.3 798.9 L549.3 812.9 L552.3 828.9 L555.3 834.5 L558.3 824.5 L561.3 829.3 L564.3 849.2 L567.3 854.8 L570.3 857.8 L573.3 865.2 L576.3 836.9 L579.3 821.3 L582.2 823.9 L585.2 822.9 L588.2 799.5 L591.2 800.5 L593.8 814.9 L596.8 829.9 L599.4 834.9 L602.4 807.9 L605.4 802.9 L608.4 793.3 L611.4 799.5 L614.0 772.9 L617.0 777.3 L620.0 772.9 L623.0 765.9 L626.0 772.5 L629.0 766.9 L632.0 779.9 L635.0 766.3 L638.0 771.3 L641.0 759.3 L644.4 754.3 L647.4 763.9 L650.4 770.9 L653.4 776.9 L656.4 762.5 L659.4 773.9 L662.4 781.9 L665.4 786.9 L668.4 793.9 L671.4 803.9 L674.4 808.5 L677.4 803.5 L680.3 806.9 L683.3 818.5 L686.3 800.9 L689.3 794.3 L692.3 802.9 L695.3 822.9 L698.3 841.3 L701.3 837.9 L704.3 822.3 L707.3 835.9 L710.3 840.5 L713.3 819.3 L716.3 833.3 L719.3 836.5 L722.3 841.9 L725.3 830.5 L728.3 838.9 L731.3 841.3 L733.7 836.5 L736.7 844.9 L739.3 819.9 L742.3 840.9 L745.3 847.8 L748.3 830.9 L751.3 816.9 L754.3 825.9 L757.3 812.9 L760.3 797.9 L763.3 792.5 L766.3 796.9 L769.3 799.9 L772.3 786.9 L775.3 797.9 L778.3 787.5 L781.2 790.9 L784.2 800.9 L787.2 814.9 L790.2 828.9 L793.2 846.8 L796.2 794.9 L799.2 800.9 L802.2 806.9 L805.2 811.9 L808.2 812.9 L811.2 818.5 L814.4 809.9 L817.4 787.9 L820.4 789.9 L823.4 800.9 L826.4 797.9 L829.4 792.9 L832.4 785.9 L835.4 777.3 L838.4 777.3 L841.4 778.5 L844.4 776.9 L847.4 780.9 L850.3 792.3 L853.3 796.9 L856.3 802.9 L859.3 788.3 L862.3 793.9 L865.3 773.9 L868.3 769.9 L870.3 754.3 L873.3 751.5 L876.3 751.9 L879.3 763.5 L882.3 748.9 L885.3 740.6 L888.3 735.4 L891.3 741.4 L894.3 755.9 L897.3 748.5 L900.3 747.9 L903.3 748.9 L906.3 762.9 L909.3 759.9 L912.3 752.9 L915.3 758.5 L918.3 741.4 L921.3 740.6 L924.3 736.6 L927.3 743.0 L930.3 742.0 L933.3 754.9 L936.3 790.9 L939.3 792.3 L942.3 795.9 L945.3 785.3 L948.3 813.9 L951.2 818.9 L954.2 819.3 L957.2 819.3 L960.2 799.9 L963.2 808.9 L966.2 819.3 L969.2 808.9 L972.2 804.5 L975.2 784.9 L978.2 769.3 L981.2 785.9 L984.2 826.9 L987.2 840.9 L990.2 849.2 L993.2 847.2 L996.2 853.4 L999.2 860.4 L1002.2 864.8 L1005.2 872.4 L1008.2 877.8 L1010.2 880.4 L1013.2 869.4 L1016.2 876.8 L1019.2 877.8 L1022.2 848.8 L1025.2 816.5 L1028.2 807.9 L1031.2 818.9 L1034.2 831.5 L1037.2 835.3 L1040.2 836.9 L1043.2 821.9 L1046.2 805.3 L1049.2 812.5 L1052.1 787.3 L1055.1 786.9 L1058.1 793.9 L1061.1 769.9 L1064.1 749.3 L1067.1 747.9 L1070.1 746.5 L1073.1 738.6 L1076.1 736.0 L1079.1 725.0 L1082.1 722.0 L1085.1 734.0 L1088.1 756.5 L1091.1 757.9 L1094.1 751.9 L1097.1 746.5 L1100.1 759.3 L1103.1 759.3 L1106.1 748.9 L1109.1 744.0 L1112.1 739.4 L1115.1 735.0 L1118.1 731.0 L1121.1 741.4 L1124.1 738.0 L1127.1 736.4 L1130.1 722.0 L1133.1 720.0 L1136.1 719.0 L1139.1 740.0 L1142.1 749.3 L1145.1 731.0 L1147.7 727.0 L1150.6 739.0 L1153.2 784.9 L1156.2 789.9 L1159.2 790.9 L1162.2 779.3 L1165.2 780.5 L1168.2 768.5 L1171.2 775.9 L1174.2 764.5 L1177.2 785.9 L1180.6 789.5 L1183.6 781.3 L1186.6 776.9 L1189.6 771.5 L1192.6 783.9 L1195.6 780.5 L1198.6 778.9 L1201.6 786.5 L1204.6 775.9 L1207.6 770.5 L1210.6 751.9 L1213.6 745.0 L1216.6 747.9 L1219.6 738.0 L1222.5 732.0 L1225.5 731.0 L1228.5 716.6 L1231.5 715.6 L1234.5 714.0 L1237.5 726.6 L1240.5 758.5 L1243.5 768.9 L1246.5 755.9 L1249.5 743.0 L1252.5 737.0 L1255.5 739.4 L1258.5 739.0 L1261.5 752.9 L1264.5 775.5 L1267.5 762.9 L1270.5 751.9 L1273.5 759.3 L1276.5 757.9 L1279.5 771.9 L1282.5 784.9 L1284.5 795.5 L1287.5 795.5 L1290.5 790.5 L1293.5 764.9 L1296.5 769.9 L1299.5 778.9 L1302.5 786.9 L1305.5 792.9 L1308.5 806.5 L1311.5 804.9 L1314.5 775.9 L1317.5 775.9 L1320.4 783.9 L1323.4 790.9 L1326.4 805.5 L1329.4 798.9 L1332.4 769.9 L1335.4 765.3 L1338.4 783.9 L1341.4 782.5 L1344.4 798.9 L1347.4 826.9 L1350.4 815.9 L1353.4 818.9 L1356.4 832.5 L1359.4 809.3 L1362.4 804.5 L1365.4 787.9 L1368.4 781.9 L1371.4 777.5 L1374.4 780.3 L1377.4 778.9 L1380.4 758.9 L1383.4 761.9 L1386.4 756.5 L1389.4 756.9 L1392.4 738.0 L1395.4 732.0 L1398.4 732.0 L1401.4 726.0 L1404.4 720.0 L1407.4 752.5 L1410.4 751.3 L1413.4 752.5 L1416.4 740.0 L1419.4 738.0 L1421.3 740.0 L1424.3 733.0 L1427.3 745.9 L1430.3 760.9 L1433.3 757.9 L1436.3 754.3 L1439.3 776.3 L1442.3 780.5 L1445.3 765.9 L1448.3 771.5 L1451.3 769.3 L1454.3 770.9 L1457.3 770.5 L1460.3 767.9 L1463.3 744.6 L1466.3 747.9 L1469.3 760.9 L1472.3 745.0 L1475.3 746.5 L1478.3 742.6 L1481.3 756.5 L1484.3 744.6 L1487.3 730.0 L1490.3 713.0 L1493.7 711.0 L1496.7 733.0 L1499.3 775.9 L1502.3 779.9 L1505.3 737.6 L1508.3 740.6 L1511.3 735.0 L1514.3 731.6 L1517.3 731.0 L1520.2 732.4 L1523.2 725.6 L1526.2 749.9 L1529.2 737.0 L1532.6 724.4" stroke="#f7e840" stroke-width="2" fill="none" stroke-linejoin="round" stroke-linecap="round"/></g>
<rect x="1582" y="211" width="207" height="31.3" fill="#3a1d4a" fill-opacity="0.75" stroke="#4caf50" stroke-width="2"/>
<path d="M1582 226.5 H1789" stroke="#f5e340" stroke-width="1" stroke-opacity="0.75" fill="none"/>
<rect x="1582" y="440" width="207" height="32" fill="#3a1d4a" fill-opacity="0.75" stroke="#f44336" stroke-width="2"/>
<path d="M1582 454.5 H1789" stroke="#f5e340" stroke-width="1" stroke-opacity="0.75" fill="none"/>
<path d="M1681 281 V253.500 M1671 263 L1681 253 L1691 263" stroke="#4caf50" stroke-width="1.9" fill="none"/>
<path d="M1681 399 V421.500 M1671 412 L1681 422 L1691 412" stroke="#f44336" stroke-width="1.9" fill="none"/>
<rect x="62" y="683" width="1850" height="1" fill="#2f3441"/>
<rect x="62" y="898" width="1850" height="1" fill="#2f3441"/>
<rect x="1847" y="99" width="1" height="799" fill="#2f3441"/>
<rect x="1911" y="99" width="1" height="828" fill="#2f3441"/>
<path d="M1847 677.5 H1851" stroke="#2f3441" stroke-width="1"/>
<text x="1857.5" y="680.7" font-size="11.8" fill="#b2b5be" textLength="35.0" lengthAdjust="spacingAndGlyphs">55.000</text>
<path d="M1847 644.5 H1851" stroke="#2f3441" stroke-width="1"/>
<text x="1857.5" y="647.7" font-size="11.8" fill="#b2b5be" textLength="35.0" lengthAdjust="spacingAndGlyphs">60.000</text>
<path d="M1847 611.5 H1851" stroke="#2f3441" stroke-width="1"/>
<text x="1857.5" y="614.7" font-size="11.8" fill="#b2b5be" textLength="35.0" lengthAdjust="spacingAndGlyphs">65.000</text>
<path d="M1847 578.5 H1851" stroke="#2f3441" stroke-width="1"/>
<text x="1857.5" y="581.7" font-size="11.8" fill="#b2b5be" textLength="35.0" lengthAdjust="spacingAndGlyphs">70.000</text>
<path d="M1847 545.5 H1851" stroke="#2f3441" stroke-width="1"/>
<text x="1857.5" y="548.7" font-size="11.8" fill="#b2b5be" textLength="35.0" lengthAdjust="spacingAndGlyphs">75.000</text>
<path d="M1847 512.5 H1851" stroke="#2f3441" stroke-width="1"/>
<text x="1857.5" y="515.7" font-size="11.8" fill="#b2b5be" textLength="35.0" lengthAdjust="spacingAndGlyphs">80.000</text>
<path d="M1847 479.5 H1851" stroke="#2f3441" stroke-width="1"/>
<text x="1857.5" y="482.7" font-size="11.8" fill="#b2b5be" textLength="35.0" lengthAdjust="spacingAndGlyphs">85.000</text>
<path d="M1847 445.5 H1851" stroke="#2f3441" stroke-width="1"/>
<text x="1857.5" y="448.7" font-size="11.8" fill="#b2b5be" textLength="35.0" lengthAdjust="spacingAndGlyphs">90.000</text>
<path d="M1847 412.5 H1851" stroke="#2f3441" stroke-width="1"/>
<text x="1857.5" y="415.7" font-size="11.8" fill="#b2b5be" textLength="35.0" lengthAdjust="spacingAndGlyphs">95.000</text>
<path d="M1847 379.5 H1851" stroke="#2f3441" stroke-width="1"/>
<text x="1857.5" y="382.7" font-size="11.8" fill="#b2b5be" textLength="41.5" lengthAdjust="spacingAndGlyphs">100.000</text>
<path d="M1847 346.5 H1851" stroke="#2f3441" stroke-width="1"/>
<text x="1857.5" y="349.7" font-size="11.8" fill="#b2b5be" textLength="41.5" lengthAdjust="spacingAndGlyphs">105.000</text>
<path d="M1847 313.5 H1851" stroke="#2f3441" stroke-width="1"/>
<text x="1857.5" y="316.7" font-size="11.8" fill="#b2b5be" textLength="41.5" lengthAdjust="spacingAndGlyphs">110.000</text>
<path d="M1847 280.5 H1851" stroke="#2f3441" stroke-width="1"/>
<text x="1857.5" y="283.7" font-size="11.8" fill="#b2b5be" textLength="41.5" lengthAdjust="spacingAndGlyphs">115.000</text>
<path d="M1847 247.5 H1851" stroke="#2f3441" stroke-width="1"/>
<text x="1857.5" y="250.7" font-size="11.8" fill="#b2b5be" textLength="41.5" lengthAdjust="spacingAndGlyphs">120.000</text>
<path d="M1847 214.5 H1851" stroke="#2f3441" stroke-width="1"/>
<text x="1857.5" y="217.7" font-size="11.8" fill="#b2b5be" textLength="41.5" lengthAdjust="spacingAndGlyphs">125.000</text>
<path d="M1847 181.5 H1851" stroke="#2f3441" stroke-width="1"/>
<text x="1857.5" y="184.7" font-size="11.8" fill="#b2b5be" textLength="41.5" lengthAdjust="spacingAndGlyphs">130.000</text>
<path d="M1847 148.5 H1851" stroke="#2f3441" stroke-width="1"/>
<text x="1857.5" y="151.7" font-size="11.8" fill="#b2b5be" textLength="41.5" lengthAdjust="spacingAndGlyphs">135.000</text>
<path d="M1847 115.5 H1851" stroke="#2f3441" stroke-width="1"/>
<text x="1857.5" y="118.7" font-size="11.8" fill="#b2b5be" textLength="41.5" lengthAdjust="spacingAndGlyphs">140.000</text>
<path d="M1847 877.5 H1851" stroke="#2f3441" stroke-width="1"/>
<text x="1857.5" y="880.7" font-size="11.8" fill="#b2b5be" textLength="28.6" lengthAdjust="spacingAndGlyphs">20.00</text>
<path d="M1847 819.5 H1851" stroke="#2f3441" stroke-width="1"/>
<text x="1857.5" y="822.7" font-size="11.8" fill="#b2b5be" textLength="28.6" lengthAdjust="spacingAndGlyphs">40.00</text>
<path d="M1847 762.5 H1851" stroke="#2f3441" stroke-width="1"/>
<text x="1857.5" y="765.7" font-size="11.8" fill="#b2b5be" textLength="28.6" lengthAdjust="spacingAndGlyphs">60.00</text>
<path d="M1847 705.5 H1851" stroke="#2f3441" stroke-width="1"/>
<text x="1857.5" y="708.7" font-size="11.8" fill="#b2b5be" textLength="28.6" lengthAdjust="spacingAndGlyphs">80.00</text>
<rect x="1847" y="147" width="59" height="17" rx="2" fill="#f7e83e"/>
<path d="M1847 155.5 H1851" stroke="#131722" stroke-width="1" stroke-opacity="0.7"/>
<text x="1857.5" y="159.5" font-size="11.8" fill="#131722" stroke="#131722" stroke-width="0.3" textLength="41.5" lengthAdjust="spacingAndGlyphs">133.904</text>
<rect x="1847" y="218" width="59" height="17" rx="2" fill="#f7e83e"/>
<path d="M1847 226.5 H1851" stroke="#131722" stroke-width="1" stroke-opacity="0.7"/>
<text x="1857.5" y="230.5" font-size="11.8" fill="#131722" stroke="#131722" stroke-width="0.3" textLength="41.5" lengthAdjust="spacingAndGlyphs">123.236</text>
<rect x="1847" y="261" width="59" height="17" rx="2" fill="#f7e83e"/>
<path d="M1847 269.5 H1851" stroke="#131722" stroke-width="1" stroke-opacity="0.7"/>
<text x="1857.5" y="273.5" font-size="11.8" fill="#131722" stroke="#131722" stroke-width="0.3" textLength="41.5" lengthAdjust="spacingAndGlyphs">116.637</text>
<rect x="1847" y="332" width="59" height="17" rx="2" fill="#f7e83e"/>
<path d="M1847 340.5 H1851" stroke="#131722" stroke-width="1" stroke-opacity="0.7"/>
<text x="1857.5" y="344.5" font-size="11.8" fill="#131722" stroke="#131722" stroke-width="0.3" textLength="41.5" lengthAdjust="spacingAndGlyphs">105.970</text>
<rect x="1847" y="402" width="52" height="17" rx="2" fill="#f7e83e"/>
<path d="M1847 410.5 H1851" stroke="#131722" stroke-width="1" stroke-opacity="0.7"/>
<text x="1857.5" y="414.5" font-size="11.8" fill="#131722" stroke="#131722" stroke-width="0.3" textLength="35.0" lengthAdjust="spacingAndGlyphs">95.303</text>
<rect x="1847" y="446" width="52" height="17" rx="2" fill="#f7e83e"/>
<path d="M1847 454.5 H1851" stroke="#131722" stroke-width="1" stroke-opacity="0.7"/>
<text x="1857.5" y="458.5" font-size="11.8" fill="#131722" stroke="#131722" stroke-width="0.3" textLength="35.0" lengthAdjust="spacingAndGlyphs">88.704</text>
<rect x="1847" y="481" width="52" height="17" rx="2" fill="#f7e83e"/>
<path d="M1847 489.5 H1851" stroke="#131722" stroke-width="1" stroke-opacity="0.7"/>
<text x="1857.5" y="493.5" font-size="11.8" fill="#131722" stroke="#131722" stroke-width="0.3" textLength="35.0" lengthAdjust="spacingAndGlyphs">83.370</text>
<rect x="1847" y="516" width="52" height="17" rx="2" fill="#f7e83e"/>
<path d="M1847 524.5 H1851" stroke="#131722" stroke-width="1" stroke-opacity="0.7"/>
<text x="1857.5" y="528.5" font-size="11.8" fill="#131722" stroke="#131722" stroke-width="0.3" textLength="35.0" lengthAdjust="spacingAndGlyphs">78.036</text>
<rect x="1847" y="306" width="59" height="17" rx="2" fill="#26a69a"/>
<path d="M1847 314.5 H1851" stroke="#ffffff" stroke-width="1" stroke-opacity="0.7"/>
<text x="1857.5" y="318.5" font-size="11.8" fill="#ffffff" stroke="#ffffff" stroke-width="0.3" textLength="41.5" lengthAdjust="spacingAndGlyphs">109.860</text>
<g clip-path="url(#ct)">
<path d="M90.5 898 V902" stroke="#2f3441" stroke-width="1"/>
<text x="90" y="916.6" font-size="11.8" fill="#b2b5be" text-anchor="middle" letter-spacing="-0.2">Jul</text>
<path d="M218.5 898 V902" stroke="#2f3441" stroke-width="1"/>
<text x="218" y="916.6" font-size="11.8" fill="#b2b5be" text-anchor="middle" letter-spacing="-0.2">Sep</text>
<path d="M343.5 898 V902" stroke="#2f3441" stroke-width="1"/>
<text x="343" y="916.6" font-size="11.8" fill="#b2b5be" text-anchor="middle" letter-spacing="-0.2">Nov</text>
<path d="M471.5 898 V902" stroke="#2f3441" stroke-width="1"/>
<text x="471" y="916.6" font-size="11.8" fill="#b2b5be" text-anchor="middle" letter-spacing="-0.2" font-weight="bold">2022</text>
<path d="M584.5 898 V902" stroke="#2f3441" stroke-width="1"/>
<text x="584" y="916.6" font-size="11.8" fill="#b2b5be" text-anchor="middle" letter-spacing="-0.2">Mar</text>
<path d="M707.5 898 V902" stroke="#2f3441" stroke-width="1"/>
<text x="707" y="916.6" font-size="11.8" fill="#b2b5be" text-anchor="middle" letter-spacing="-0.2">May</text>
<path d="M831.5 898 V902" stroke="#2f3441" stroke-width="1"/>
<text x="831" y="916.6" font-size="11.8" fill="#b2b5be" text-anchor="middle" letter-spacing="-0.2">Jul</text>
<path d="M960.5 898 V902" stroke="#2f3441" stroke-width="1"/>
<text x="960" y="916.6" font-size="11.8" fill="#b2b5be" text-anchor="middle" letter-spacing="-0.2">Sep</text>
<path d="M1083.5 898 V902" stroke="#2f3441" stroke-width="1"/>
<text x="1083" y="916.6" font-size="11.8" fill="#b2b5be" text-anchor="middle" letter-spacing="-0.2">Nov</text>
<path d="M1209.5 898 V902" stroke="#2f3441" stroke-width="1"/>
<text x="1209" y="916.6" font-size="11.8" fill="#b2b5be" text-anchor="middle" letter-spacing="-0.2" font-weight="bold">2023</text>
<path d="M1326.5 898 V902" stroke="#2f3441" stroke-width="1"/>
<text x="1326" y="916.6" font-size="11.8" fill="#b2b5be" text-anchor="middle" letter-spacing="-0.2">Mar</text>
<path d="M1451.5 898 V902" stroke="#2f3441" stroke-width="1"/>
<text x="1451" y="916.6" font-size="11.8" fill="#b2b5be" text-anchor="middle" letter-spacing="-0.2">May</text>
<path d="M1582.5 898 V902" stroke="#2f3441" stroke-width="1"/>
<text x="1582" y="916.6" font-size="11.8" fill="#b2b5be" text-anchor="middle" letter-spacing="-0.2">Jul</text>
<path d="M1713.5 898 V902" stroke="#2f3441" stroke-width="1"/>
<text x="1713" y="916.6" font-size="11.8" fill="#b2b5be" text-anchor="middle" letter-spacing="-0.2">Sep</text>
<path d="M1839.5 898 V902" stroke="#2f3441" stroke-width="1"/>
<text x="1839" y="916.6" font-size="11.8" fill="#b2b5be" text-anchor="middle" letter-spacing="-0.2">Nov</text>
</g>
<defs><clipPath id="ct"><rect x="62" y="898" width="1785" height="29"/></clipPath></defs>
<g stroke="#b2b5be" stroke-width="1.1" fill="none"><circle cx="1879.5" cy="912.5" r="5.2"/><path d="M1879.5 905.3 v2 M1879.5 917.7 v2 M1872.3 912.5 h2 M1884.7 912.5 h2 M1874.4 907.4 l1.4 1.4 M1883.2 916.2 l1.4 1.4 M1874.4 917.6 l1.4 -1.4 M1883.2 908.8 l1.4 -1.4"/></g>
<rect x="55.5" y="880.5" width="8" height="25" rx="3" fill="#131722" stroke="#363a45"/>
<path d="M61 889.5 L58.5 893 L61 896.5" stroke="#868b98" stroke-width="1" fill="none"/>

<text x="71.0" y="120.2" font-size="15.2" fill="#d1d4dc" textLength="75.5" lengthAdjust="spacingAndGlyphs">ORCL.US-d</text>
<circle cx="153.5" cy="115.3" r="1" fill="#6a6e7a"/>
<text x="160.0" y="120.2" font-size="15.2" fill="#d1d4dc" textLength="16.8" lengthAdjust="spacingAndGlyphs">1D</text>
<circle cx="201.8" cy="115.2" r="8.8" fill="#2c303c"/><rect x="197.2" y="113.700" width="9.2" height="3" rx="1.5" fill="#c5c8d0"/>
<rect x="221" y="103.500" width="206" height="23" fill="#1d212c" fill-opacity="0.85"/><rect x="427" y="103.500" width="139.500" height="23" fill="#4b4540" fill-opacity="0.8"/>
<text x="227.0" y="120.7" font-size="12" fill="#d1d4dc">O</text>
<text x="236.6" y="120.7" font-size="12.3" fill="#2bb3a4" textLength="44.8" lengthAdjust="spacingAndGlyphs">107.730</text>
<text x="288.5" y="120.7" font-size="12" fill="#d1d4dc">H</text>
<text x="297.9" y="120.7" font-size="12.3" fill="#2bb3a4" textLength="44.8" lengthAdjust="spacingAndGlyphs">110.130</text>
<text x="349.2" y="120.7" font-size="12" fill="#d1d4dc">L</text>
<text x="357.1" y="120.7" font-size="12.3" fill="#2bb3a4" textLength="44.8" lengthAdjust="spacingAndGlyphs">107.410</text>
<text x="409.0" y="120.7" font-size="12" fill="#d1d4dc">C</text>
<text x="417.7" y="120.7" font-size="12.3" fill="#2bb3a4" textLength="44.8" lengthAdjust="spacingAndGlyphs">109.860</text>
<text x="469.6" y="120.7" font-size="12.3" fill="#2bb3a4" textLength="91.0" lengthAdjust="spacingAndGlyphs">+2.380 (+2.21%)</text>
<rect x="70.500" y="131.500" width="61.200" height="36.800" rx="3" fill="#131722" stroke="#ef5350" stroke-width="1.2"/>
<text x="78.6" y="155.2" font-size="12.8" fill="#ef5350" textLength="44.6" lengthAdjust="spacingAndGlyphs">109.860</text>
<rect x="181.300" y="131.500" width="61.200" height="36.800" rx="3" fill="#131722" stroke="#26a69a" stroke-width="1.2"/>
<text x="189.2" y="155.2" font-size="12.8" fill="#26a69a" textLength="44.6" lengthAdjust="spacingAndGlyphs">109.880</text>
<text x="142.6" y="142.2" font-size="11.2" fill="#e6e8ee" textLength="27.2" lengthAdjust="spacingAndGlyphs">0.020</text>
<rect x="136.600" y="147.800" width="40" height="20.600" rx="2" fill="#1c202b"/>
<text x="143.3" y="162.3" font-size="12.8" fill="#f0f2f6" textLength="24.8" lengthAdjust="spacingAndGlyphs">0.01</text>
<text x="71.0" y="189.9" font-size="12.4" fill="#b8bbc4" textLength="78.4" lengthAdjust="spacingAndGlyphs">EMA 9 close 0</text>
<text x="158.3" y="189.9" font-size="12.4" fill="#4caf50" textLength="44.9" lengthAdjust="spacingAndGlyphs">106.157</text>
<text x="71.0" y="213.7" font-size="12.4" fill="#b8bbc4" textLength="92.1" lengthAdjust="spacingAndGlyphs">EMA 200 close 0</text>
<text x="171.4" y="213.7" font-size="12.4" fill="#f44336" textLength="38.6" lengthAdjust="spacingAndGlyphs">88.106</text>
<text x="71.0" y="237.8" font-size="12.4" fill="#b8bbc4" textLength="92.1" lengthAdjust="spacingAndGlyphs">EMA 200 close 0</text>
<text x="171.4" y="237.8" font-size="12.4" fill="#f44336" textLength="38.6" lengthAdjust="spacingAndGlyphs">88.106</text>
<text x="71.0" y="261.9" font-size="12.4" fill="#b8bbc4" textLength="92.1" lengthAdjust="spacingAndGlyphs">EMA 100 close 0</text>
<text x="171.4" y="261.9" font-size="12.4" fill="#3b97f3" textLength="38.6" lengthAdjust="spacingAndGlyphs">93.669</text>
<text x="71.0" y="285.7" font-size="12.4" fill="#b8bbc4" textLength="92.1" lengthAdjust="spacingAndGlyphs">EMA 200 close 0</text>
<text x="171.4" y="285.7" font-size="12.4" fill="#f44336" textLength="38.6" lengthAdjust="spacingAndGlyphs">88.106</text>
<text x="71.0" y="309.8" font-size="12.4" fill="#b8bbc4" textLength="85.1" lengthAdjust="spacingAndGlyphs">EMA 50 close 0</text>
<text x="164.7" y="309.8" font-size="12.4" fill="#ae18e8" textLength="38.6" lengthAdjust="spacingAndGlyphs">98.613</text>
<rect x="71.500" y="319.500" width="28" height="20" rx="2" fill="#131722" stroke="#363a45"/>
<path d="M81.200 332.200 L85.500 328 L89.800 332.200" stroke="#d1d4dc" stroke-width="1.4" fill="none"/>
<text x="71.0" y="703.6" font-size="12.4" fill="#b8bbc4" textLength="16.6" lengthAdjust="spacingAndGlyphs">RSI</text>
<text x="92.8" y="703.6" font-size="12.4" fill="#868993" textLength="12.8" lengthAdjust="spacingAndGlyphs">14</text>
<text x="113.8" y="703.6" font-size="12.4" fill="#f5e340" textLength="32.0" lengthAdjust="spacingAndGlyphs">73.30</text>
</svg>
<div id="bbar">
 <div class="bt" style="left:16px;top:1px;color:#e0e3eb;font-size:12.5px;letter-spacing:-0.4px">Powered by <span style="color:#2f81e6">TradingView</span></div>
 <div class="vsep" style="left:158px;height:37px"></div>
 <div class="bt" style="left:175px">1D</div><div class="bt" style="left:204px">5D</div><div class="bt" style="left:235px">1M</div><div class="bt" style="left:266px">3M</div><div class="bt" style="left:297px">6M</div><div class="bt" style="left:328px">1Y</div><div class="bt" style="left:358px">5Y</div><div class="bt" style="left:387px">All</div>
 <div class="vsep" style="left:420px;top:8px;height:21px"></div>
 <svg class="abs" style="left:434px;top:6px" width="24" height="24" viewBox="0 0 24 24"><g fill="none" stroke="#868b98" stroke-width="1.1"><path d="M4.6 9.6 V7 Q4.6 5.4 6.2 5.4 H18.4 Q20 5.4 20 7 V17.4 Q20 19 18.4 19 H11 M4.6 8.6 H20 M8.2 3.6 V5.4 M16.4 3.6 V5.4 M3 14.2 H11 M8.2 11.2 L11.2 14.2 L8.2 17.2"/></g></svg>
 <div class="bt" style="left:1607px;font-size:14px;letter-spacing:-0.3px">08:24:21 (UTC+2)</div>
 <div class="vsep" style="left:1732px;top:8px;height:21px"></div>
 <div class="bt" style="left:1748px;font-size:15px;color:#a0a4af">%</div>
 <div class="bt" style="left:1777px;font-size:14px;color:#a0a4af">log</div>
 <div class="bt" style="left:1809px;font-size:14px;color:#a0a4af">auto</div>
 <div class="abs" style="left:1826px;top:-3px;width:44px;height:44px;border-radius:22px;background:#1e222d"></div>
 <svg class="abs" style="left:1835px;top:9px" width="14" height="20" viewBox="0 0 14 20"><path d="M10 2 L3.6 10 L10 18" fill="none" stroke="#3d8be8" stroke-width="2"/></svg>
</div>
<div id="bbot"></div>

</body></html>
